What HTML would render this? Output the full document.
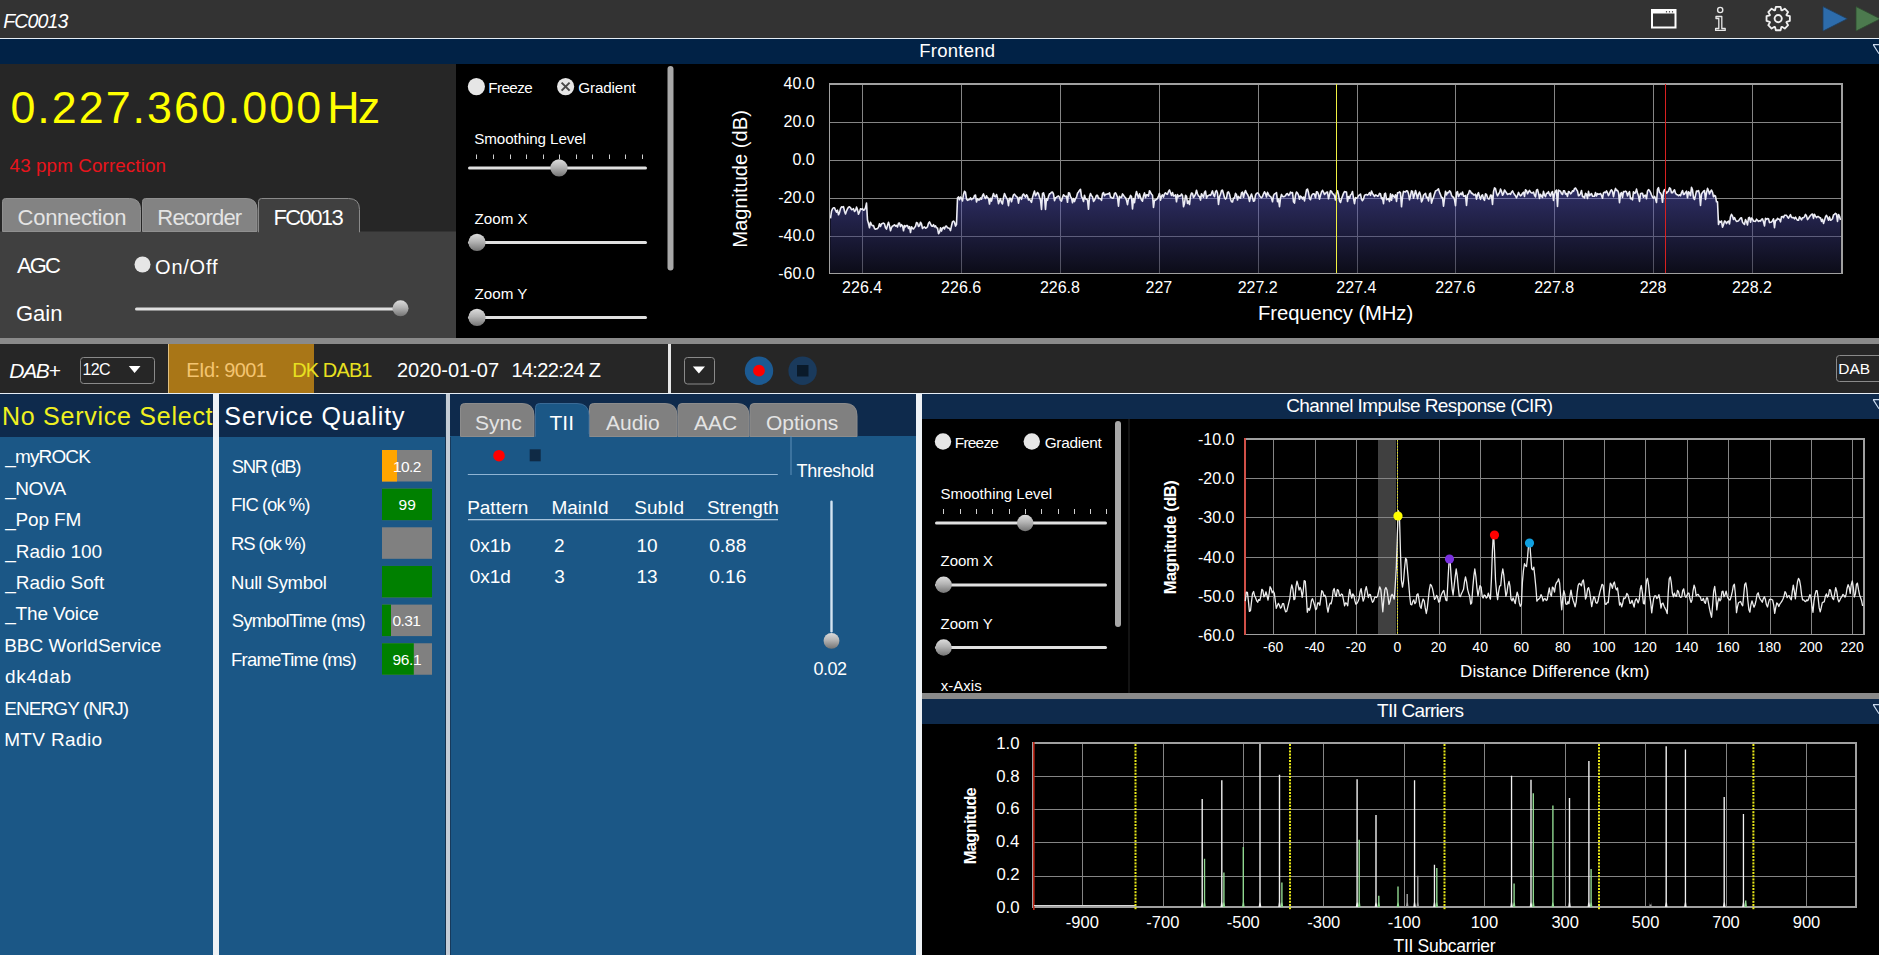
<!DOCTYPE html>
<html><head><meta charset="utf-8"><title>FC0013</title>
<style>html,body{margin:0;padding:0;background:#262626;overflow:hidden;} svg{display:block;}</style>
</head><body>
<svg width="1879" height="955" viewBox="0 0 1879 955">
<defs>
<linearGradient id="thumb" x1="0" y1="0" x2="0" y2="1">
<stop offset="0" stop-color="#dcdcdc"/><stop offset="0.45" stop-color="#b4b4b4"/><stop offset="1" stop-color="#747474"/>
</linearGradient>
<linearGradient id="specfill" gradientUnits="userSpaceOnUse" x1="0" y1="190" x2="0" y2="273">
<stop offset="0" stop-color="#5c5cc8" stop-opacity="0.5"/><stop offset="1" stop-color="#181830" stop-opacity="0.5"/>
</linearGradient>
</defs>
<rect x="0" y="0" width="1879" height="38" fill="#333333" />
<rect x="0" y="38" width="1879" height="1" fill="#e6eef6" />
<text x="3.19" y="27.70" font-family="Liberation Sans" font-size="19.60" fill="#ffffff" font-style="italic" textLength="65.30" lengthAdjust="spacing" >FC0013</text>
<rect x="1652" y="10" width="23.5" height="17.5" fill="none" stroke="#fff" stroke-width="2"/>
<rect x="1652" y="10" width="24" height="3.5" fill="#fff" />
<rect x="1665.9" y="11.2" width="1.2" height="1.2" fill="#333"/>
<rect x="1668.9" y="11.2" width="1.2" height="1.2" fill="#333"/>
<rect x="1671.9" y="11.2" width="1.2" height="1.2" fill="#333"/>
<circle cx="1720.2" cy="10" r="2.6" fill="none" stroke="#e8e8e8" stroke-width="1.4"/>
<path d="M1716 16.5 L1721.8 16.5 L1721.8 28.5 L1725.2 28.5 L1725.2 30.4 L1715.6 30.4 L1715.6 28.5 L1718.8 28.5 L1718.8 18.5 L1716 18.5 Z" fill="none" stroke="#e8e8e8" stroke-width="1.3" stroke-linejoin="round"/>
<polygon points="1786.62,15.43 1789.86,16.24 1789.86,20.96 1786.62,21.77 1786.40,22.31 1788.12,25.18 1784.78,28.52 1781.91,26.80 1781.37,27.02 1780.56,30.26 1775.84,30.26 1775.03,27.02 1774.49,26.80 1771.62,28.52 1768.28,25.18 1770.00,22.31 1769.78,21.77 1766.54,20.96 1766.54,16.24 1769.78,15.43 1770.00,14.89 1768.28,12.02 1771.62,8.68 1774.49,10.40 1775.03,10.18 1775.84,6.94 1780.56,6.94 1781.37,10.18 1781.91,10.40 1784.78,8.68 1788.12,12.02 1786.40,14.89" fill="none" stroke="#f0f0f0" stroke-width="1.8" stroke-linejoin="round"/>
<circle cx="1778.2" cy="18.6" r="3.6" fill="none" stroke="#f0f0f0" stroke-width="1.9"/>
<polygon points="1823,6.6 1847.3,18.8 1823,31.1" fill="#2d6cab" stroke="#1f3f5f" stroke-width="0.8"/>
<polygon points="1856,6.6 1880.3,18.8 1856,31.1" fill="#4c7a4e" stroke="#2f4a30" stroke-width="0.8"/>
<rect x="0" y="39" width="1879" height="25" fill="#012246" />
<text x="919.28" y="56.80" font-family="Liberation Sans" font-size="18.50" fill="#ffffff" textLength="75.81" lengthAdjust="spacing" >Frontend</text>
<path d="M1873 44.6 L1879 44.6 M1873.2 44.6 L1879 53.8" stroke="#c8d8ec" stroke-width="1.2" fill="none"/>
<rect x="0" y="64" width="456" height="274" fill="#262626" />
<rect x="0" y="231.5" width="456" height="106.5" fill="#404040" />
<text x="10.45" y="123.10" font-family="Liberation Sans" font-size="44.80" fill="#ffff00" textLength="310.60" lengthAdjust="spacing" >0.227.360.000</text>
<text x="327.33" y="123.10" font-family="Liberation Sans" font-size="44.80" fill="#ffff00" textLength="52.82" lengthAdjust="spacing" >Hz</text>
<text x="9.57" y="172.00" font-family="Liberation Sans" font-size="18.80" fill="#e8141c" textLength="156.46" lengthAdjust="spacing" >43 ppm Correction</text>
<path d="M2.5 231.5 L2.5 201.5 Q2.5 198.5 5.5 198.5 L129.5 198.5 Q140.5 198.5 140.5 209.5 L140.5 231.5 Z" fill="#838383" stroke="#909090" stroke-width="1"/>
<path d="M142.5 231.5 L142.5 201.5 Q142.5 198.5 145.5 198.5 L246 198.5 Q257 198.5 257 209.5 L257 231.5 Z" fill="#838383" stroke="#909090" stroke-width="1"/>
<path d="M258.5 232 L258.5 201.5 Q258.5 198.5 261.5 198.5 L348.5 198.5 Q359.5 198.5 359.5 209.5 L359.5 232 Z" fill="#404040" stroke="#8a8a8a" stroke-width="1"/>
<rect x="259" y="230" width="100" height="3" fill="#404040" />
<text x="17.58" y="224.90" font-family="Liberation Sans" font-size="22.00" fill="#e4e4e4" textLength="108.85" lengthAdjust="spacing" >Connection</text>
<text x="157.30" y="224.90" font-family="Liberation Sans" font-size="22.00" fill="#e4e4e4" textLength="84.87" lengthAdjust="spacing" >Recorder</text>
<text x="273.50" y="224.90" font-family="Liberation Sans" font-size="22.00" fill="#ffffff" textLength="70.19" lengthAdjust="spacing" >FC0013</text>
<text x="16.96" y="272.50" font-family="Liberation Sans" font-size="22.00" fill="#ffffff" textLength="43.88" lengthAdjust="spacing" >AGC</text>
<circle cx="142.5" cy="264.5" r="8" fill="#e6e6e6"/>
<text x="155.06" y="274.00" font-family="Liberation Sans" font-size="20.00" fill="#ffffff" textLength="62.42" lengthAdjust="spacing" >On/Off</text>
<text x="15.90" y="321.00" font-family="Liberation Sans" font-size="22.00" fill="#ffffff" textLength="46.54" lengthAdjust="spacing" >Gain</text>
<rect x="135" y="307.5" width="260" height="3" fill="#e0e0e0" rx="1.5"/>
<circle cx="400.5" cy="308.3" r="8" fill="url(#thumb)"/>
<rect x="456" y="64" width="1423" height="274" fill="#000000" />
<circle cx="476.4" cy="86.6" r="8.6" fill="#e6e6e6"/>
<text x="488.35" y="92.80" font-family="Liberation Sans" font-size="15.20" fill="#ffffff" textLength="44.32" lengthAdjust="spacing" >Freeze</text>
<circle cx="565.6" cy="86.6" r="8.6" fill="#e6e6e6"/>
<path d="M561.6 82.6 L569.6 90.6 M569.6 82.6 L561.6 90.6" stroke="#484848" stroke-width="2"/>
<text x="578.24" y="92.80" font-family="Liberation Sans" font-size="15.20" fill="#ffffff" textLength="57.46" lengthAdjust="spacing" >Gradient</text>
<text x="474.30" y="144.10" font-family="Liberation Sans" font-size="15.20" fill="#ffffff" textLength="111.62" lengthAdjust="spacing" >Smoothing Level</text>
<rect x="476" y="154.5" width="1" height="4.5" fill="#d0d0d0" />
<rect x="493" y="154.5" width="1" height="4.5" fill="#d0d0d0" />
<rect x="510" y="154.5" width="1" height="4.5" fill="#d0d0d0" />
<rect x="526" y="154.5" width="1" height="4.5" fill="#d0d0d0" />
<rect x="543" y="154.5" width="1" height="4.5" fill="#d0d0d0" />
<rect x="559" y="154.5" width="1" height="4.5" fill="#d0d0d0" />
<rect x="576" y="154.5" width="1" height="4.5" fill="#d0d0d0" />
<rect x="592" y="154.5" width="1" height="4.5" fill="#d0d0d0" />
<rect x="609" y="154.5" width="1" height="4.5" fill="#d0d0d0" />
<rect x="625" y="154.5" width="1" height="4.5" fill="#d0d0d0" />
<rect x="642" y="154.5" width="1" height="4.5" fill="#d0d0d0" />
<rect x="468" y="166.5" width="179" height="3" fill="#e0e0e0" rx="1.5"/>
<circle cx="559" cy="167.9" r="8.6" fill="url(#thumb)"/>
<text x="474.51" y="224.20" font-family="Liberation Sans" font-size="15.20" fill="#ffffff" >Zoom X</text>
<rect x="468" y="241" width="179" height="3" fill="#e0e0e0" rx="1.5"/>
<circle cx="477" cy="242.4" r="8.6" fill="url(#thumb)"/>
<text x="474.51" y="299.00" font-family="Liberation Sans" font-size="15.20" fill="#ffffff" >Zoom Y</text>
<rect x="468" y="316" width="179" height="3" fill="#e0e0e0" rx="1.5"/>
<circle cx="477" cy="317.4" r="8.6" fill="url(#thumb)"/>
<rect x="667.5" y="66" width="6" height="204.5" fill="#a8a8a8" rx="3"/>
<rect x="829" y="122" width="1013" height="1" fill="#858585" />
<rect x="829" y="160" width="1013" height="1" fill="#858585" />
<rect x="829" y="198" width="1013" height="1" fill="#858585" />
<rect x="829" y="236" width="1013" height="1" fill="#858585" />
<rect x="862" y="84" width="1" height="189" fill="#858585" />
<rect x="961" y="84" width="1" height="189" fill="#858585" />
<rect x="1060" y="84" width="1" height="189" fill="#858585" />
<rect x="1159" y="84" width="1" height="189" fill="#858585" />
<rect x="1258" y="84" width="1" height="189" fill="#858585" />
<rect x="1357" y="84" width="1" height="189" fill="#858585" />
<rect x="1455" y="84" width="1" height="189" fill="#858585" />
<rect x="1554" y="84" width="1" height="189" fill="#858585" />
<rect x="1653" y="84" width="1" height="189" fill="#858585" />
<rect x="1752" y="84" width="1" height="189" fill="#858585" />
<polygon points="830.0,273.5 830.5,218.3 831.5,211.3 832.5,208.8 833.5,207.8 834.5,207.8 835.5,210.1 836.5,212.2 837.5,210.1 838.5,214.8 839.5,212.6 840.5,208.6 841.5,206.9 842.5,207.1 843.5,206.7 844.5,211.2 845.5,213.9 846.5,211.1 847.5,208.7 848.5,207.2 849.5,206.7 850.5,207.7 851.5,209.7 852.5,209.4 853.5,208.7 854.5,211.4 855.5,210.7 856.5,207.1 857.5,209.6 858.5,214.3 859.5,212.0 860.5,208.8 861.5,209.4 862.5,208.7 863.5,210.2 864.5,209.8 865.5,207.7 866.5,203.1 867.5,220.1 868.5,223.5 869.5,227.8 870.5,222.2 871.5,224.8 872.5,225.8 873.5,225.5 874.5,228.6 875.5,229.3 876.5,228.7 877.5,228.6 878.5,227.1 879.5,223.7 880.5,226.4 881.5,224.0 882.5,223.4 883.5,223.1 884.5,223.9 885.5,227.8 886.5,229.1 887.5,225.2 888.5,222.3 889.5,225.7 890.5,230.8 891.5,227.6 892.5,226.0 893.5,225.7 894.5,224.8 895.5,226.1 896.5,225.4 897.5,227.0 898.5,223.3 899.5,223.0 900.5,226.6 901.5,224.7 902.5,225.7 903.5,230.8 904.5,225.5 905.5,226.8 906.5,225.6 907.5,225.6 908.5,228.5 909.5,226.6 910.5,232.5 911.5,226.7 912.5,228.5 913.5,228.9 914.5,227.6 915.5,226.2 916.5,222.5 917.5,223.1 918.5,226.4 919.5,225.8 920.5,222.2 921.5,224.0 922.5,228.5 923.5,227.5 924.5,226.9 925.5,228.3 926.5,227.8 927.5,226.7 928.5,223.3 929.5,221.9 930.5,223.8 931.5,225.9 932.5,226.3 933.5,224.7 934.5,226.8 935.5,225.8 936.5,227.8 937.5,228.0 938.5,233.7 939.5,232.3 940.5,227.8 941.5,231.1 942.5,228.1 943.5,227.3 944.5,229.0 945.5,226.2 946.5,226.1 947.5,227.8 948.5,228.0 949.5,228.5 950.5,230.6 951.5,225.8 952.5,221.8 953.5,221.0 954.5,222.2 955.5,226.1 956.5,224.4 957.5,198.1 958.5,196.9 959.5,199.8 960.5,197.1 961.5,198.2 962.5,201.0 963.5,194.4 964.5,191.2 965.5,192.3 966.5,199.0 967.5,200.4 968.5,199.8 969.5,199.5 970.5,197.8 971.5,199.7 972.5,198.5 973.5,198.4 974.5,195.4 975.5,195.1 976.5,201.9 977.5,198.7 978.5,199.9 979.5,199.9 980.5,197.9 981.5,199.2 982.5,195.6 983.5,193.9 984.5,197.1 985.5,198.5 986.5,195.8 987.5,197.8 988.5,198.2 989.5,204.0 990.5,198.2 991.5,201.1 992.5,196.7 993.5,193.6 994.5,196.4 995.5,196.9 996.5,194.6 997.5,197.8 998.5,203.7 999.5,200.7 1000.5,198.6 1001.5,202.6 1002.5,203.9 1003.5,197.5 1004.5,193.5 1005.5,195.9 1006.5,197.9 1007.5,199.6 1008.5,205.6 1009.5,198.2 1010.5,198.3 1011.5,201.8 1012.5,197.9 1013.5,194.8 1014.5,194.1 1015.5,195.6 1016.5,196.8 1017.5,197.2 1018.5,203.1 1019.5,197.6 1020.5,197.4 1021.5,199.3 1022.5,195.3 1023.5,194.0 1024.5,195.5 1025.5,197.2 1026.5,194.8 1027.5,196.2 1028.5,200.0 1029.5,199.4 1030.5,200.6 1031.5,202.4 1032.5,197.4 1033.5,193.9 1034.5,191.1 1035.5,195.8 1036.5,194.3 1037.5,192.5 1038.5,193.6 1039.5,197.3 1040.5,199.9 1041.5,209.5 1042.5,193.7 1043.5,192.8 1044.5,196.6 1045.5,209.5 1046.5,198.7 1047.5,200.4 1048.5,196.4 1049.5,193.8 1050.5,193.6 1051.5,192.3 1052.5,192.1 1053.5,194.2 1054.5,200.7 1055.5,197.7 1056.5,197.4 1057.5,196.4 1058.5,195.9 1059.5,197.2 1060.5,200.4 1061.5,201.1 1062.5,197.5 1063.5,194.7 1064.5,195.8 1065.5,196.6 1066.5,196.2 1067.5,202.3 1068.5,192.9 1069.5,193.0 1070.5,196.7 1071.5,197.9 1072.5,202.8 1073.5,198.5 1074.5,201.6 1075.5,198.5 1076.5,197.3 1077.5,193.3 1078.5,192.0 1079.5,190.3 1080.5,189.4 1081.5,196.7 1082.5,198.2 1083.5,201.5 1084.5,195.2 1085.5,198.9 1086.5,199.1 1087.5,200.1 1088.5,209.3 1089.5,196.7 1090.5,193.5 1091.5,195.8 1092.5,196.8 1093.5,201.4 1094.5,200.3 1095.5,197.9 1096.5,195.3 1097.5,195.3 1098.5,198.5 1099.5,198.4 1100.5,198.9 1101.5,200.3 1102.5,193.7 1103.5,192.5 1104.5,195.7 1105.5,194.4 1106.5,194.2 1107.5,193.9 1108.5,194.0 1109.5,192.9 1110.5,197.2 1111.5,197.4 1112.5,198.3 1113.5,197.9 1114.5,193.5 1115.5,192.8 1116.5,194.7 1117.5,197.3 1118.5,206.2 1119.5,196.2 1120.5,197.5 1121.5,197.5 1122.5,193.9 1123.5,195.2 1124.5,196.8 1125.5,197.6 1126.5,200.2 1127.5,204.6 1128.5,198.7 1129.5,198.3 1130.5,195.4 1131.5,196.6 1132.5,209.0 1133.5,198.6 1134.5,202.6 1135.5,195.7 1136.5,191.5 1137.5,194.9 1138.5,198.1 1139.5,193.9 1140.5,197.4 1141.5,200.0 1142.5,201.1 1143.5,195.7 1144.5,192.9 1145.5,197.7 1146.5,194.8 1147.5,194.8 1148.5,196.2 1149.5,190.7 1150.5,192.5 1151.5,194.2 1152.5,195.3 1153.5,207.5 1154.5,200.0 1155.5,200.2 1156.5,199.4 1157.5,198.4 1158.5,196.0 1159.5,193.4 1160.5,200.1 1161.5,196.3 1162.5,194.8 1163.5,197.1 1164.5,194.1 1165.5,192.8 1166.5,193.9 1167.5,194.3 1168.5,191.4 1169.5,190.0 1170.5,192.7 1171.5,195.5 1172.5,192.6 1173.5,196.0 1174.5,195.8 1175.5,194.8 1176.5,201.8 1177.5,194.5 1178.5,196.8 1179.5,195.7 1180.5,195.9 1181.5,194.0 1182.5,195.4 1183.5,206.7 1184.5,203.5 1185.5,195.4 1186.5,196.4 1187.5,203.4 1188.5,201.1 1189.5,204.5 1190.5,196.0 1191.5,193.0 1192.5,193.5 1193.5,197.5 1194.5,196.1 1195.5,194.2 1196.5,190.3 1197.5,193.7 1198.5,196.0 1199.5,196.5 1200.5,200.1 1201.5,193.7 1202.5,195.4 1203.5,197.3 1204.5,192.4 1205.5,191.1 1206.5,198.2 1207.5,196.0 1208.5,195.6 1209.5,194.9 1210.5,195.4 1211.5,193.4 1212.5,190.9 1213.5,194.9 1214.5,196.6 1215.5,191.8 1216.5,190.5 1217.5,193.0 1218.5,204.5 1219.5,196.6 1220.5,194.2 1221.5,190.6 1222.5,190.2 1223.5,193.8 1224.5,197.7 1225.5,199.1 1226.5,197.9 1227.5,192.5 1228.5,191.9 1229.5,194.2 1230.5,198.9 1231.5,201.8 1232.5,202.0 1233.5,198.0 1234.5,198.1 1235.5,193.4 1236.5,194.8 1237.5,200.0 1238.5,196.4 1239.5,197.7 1240.5,198.2 1241.5,192.9 1242.5,192.1 1243.5,197.3 1244.5,193.1 1245.5,190.5 1246.5,193.1 1247.5,194.4 1248.5,196.8 1249.5,201.4 1250.5,196.5 1251.5,194.1 1252.5,197.5 1253.5,201.2 1254.5,200.8 1255.5,195.1 1256.5,193.4 1257.5,192.9 1258.5,193.5 1259.5,195.6 1260.5,197.1 1261.5,197.7 1262.5,196.5 1263.5,193.8 1264.5,191.8 1265.5,193.6 1266.5,196.9 1267.5,192.3 1268.5,194.3 1269.5,196.1 1270.5,196.4 1271.5,198.2 1272.5,201.8 1273.5,195.7 1274.5,193.9 1275.5,193.6 1276.5,192.6 1277.5,201.6 1278.5,199.1 1279.5,206.7 1280.5,198.2 1281.5,194.4 1282.5,196.5 1283.5,196.6 1284.5,196.5 1285.5,195.7 1286.5,194.0 1287.5,193.5 1288.5,195.5 1289.5,194.6 1290.5,192.1 1291.5,192.9 1292.5,192.5 1293.5,201.8 1294.5,203.1 1295.5,195.2 1296.5,192.0 1297.5,193.1 1298.5,195.0 1299.5,199.2 1300.5,196.1 1301.5,196.8 1302.5,199.0 1303.5,197.0 1304.5,200.9 1305.5,195.4 1306.5,189.8 1307.5,189.0 1308.5,192.7 1309.5,198.5 1310.5,199.7 1311.5,195.6 1312.5,194.2 1313.5,193.7 1314.5,194.3 1315.5,197.8 1316.5,191.7 1317.5,192.1 1318.5,194.4 1319.5,199.1 1320.5,195.3 1321.5,191.9 1322.5,190.3 1323.5,192.1 1324.5,194.4 1325.5,193.4 1326.5,192.2 1327.5,192.0 1328.5,198.8 1329.5,194.9 1330.5,190.8 1331.5,191.4 1332.5,193.8 1333.5,194.0 1334.5,195.8 1335.5,200.0 1336.5,192.6 1337.5,190.8 1338.5,194.5 1339.5,200.9 1340.5,202.5 1341.5,198.7 1342.5,196.1 1343.5,193.4 1344.5,191.5 1345.5,191.9 1346.5,192.0 1347.5,201.5 1348.5,196.5 1349.5,198.4 1350.5,195.0 1351.5,194.2 1352.5,191.5 1353.5,198.3 1354.5,203.6 1355.5,197.6 1356.5,198.2 1357.5,197.8 1358.5,195.5 1359.5,195.1 1360.5,194.1 1361.5,199.2 1362.5,200.7 1363.5,199.1 1364.5,195.4 1365.5,194.8 1366.5,194.5 1367.5,195.1 1368.5,194.3 1369.5,192.7 1370.5,195.3 1371.5,191.1 1372.5,193.6 1373.5,194.9 1374.5,196.5 1375.5,194.9 1376.5,195.3 1377.5,196.3 1378.5,195.7 1379.5,193.4 1380.5,193.8 1381.5,198.7 1382.5,197.8 1383.5,203.6 1384.5,193.9 1385.5,193.2 1386.5,199.7 1387.5,199.3 1388.5,198.5 1389.5,201.4 1390.5,193.9 1391.5,200.3 1392.5,194.6 1393.5,196.3 1394.5,197.3 1395.5,194.8 1396.5,201.4 1397.5,192.8 1398.5,192.8 1399.5,191.9 1400.5,192.9 1401.5,206.8 1402.5,197.0 1403.5,191.4 1404.5,191.7 1405.5,191.9 1406.5,190.8 1407.5,191.1 1408.5,193.8 1409.5,199.8 1410.5,195.7 1411.5,190.9 1412.5,191.4 1413.5,198.3 1414.5,194.8 1415.5,190.6 1416.5,193.9 1417.5,198.7 1418.5,194.4 1419.5,192.1 1420.5,195.0 1421.5,201.9 1422.5,200.0 1423.5,195.4 1424.5,194.3 1425.5,193.3 1426.5,197.7 1427.5,197.3 1428.5,200.9 1429.5,194.0 1430.5,193.0 1431.5,203.1 1432.5,199.5 1433.5,197.4 1434.5,193.9 1435.5,190.9 1436.5,190.6 1437.5,189.9 1438.5,188.9 1439.5,192.4 1440.5,194.6 1441.5,197.7 1442.5,197.5 1443.5,206.2 1444.5,198.7 1445.5,191.3 1446.5,194.9 1447.5,192.5 1448.5,192.8 1449.5,190.8 1450.5,191.8 1451.5,195.1 1452.5,197.0 1453.5,197.0 1454.5,199.6 1455.5,205.6 1456.5,192.6 1457.5,191.6 1458.5,196.5 1459.5,194.9 1460.5,193.3 1461.5,194.6 1462.5,192.0 1463.5,196.1 1464.5,196.1 1465.5,195.5 1466.5,205.5 1467.5,194.8 1468.5,193.7 1469.5,190.6 1470.5,191.2 1471.5,193.5 1472.5,193.3 1473.5,194.9 1474.5,195.0 1475.5,194.2 1476.5,199.1 1477.5,194.7 1478.5,192.7 1479.5,196.7 1480.5,199.3 1481.5,195.8 1482.5,194.8 1483.5,198.8 1484.5,200.4 1485.5,193.9 1486.5,194.5 1487.5,197.6 1488.5,199.0 1489.5,198.7 1490.5,195.1 1491.5,195.2 1492.5,204.5 1493.5,191.8 1494.5,187.9 1495.5,188.7 1496.5,193.2 1497.5,195.8 1498.5,193.9 1499.5,192.6 1500.5,189.1 1501.5,191.3 1502.5,195.2 1503.5,193.7 1504.5,190.0 1505.5,191.5 1506.5,192.8 1507.5,194.5 1508.5,193.9 1509.5,193.6 1510.5,194.3 1511.5,192.2 1512.5,190.9 1513.5,192.8 1514.5,194.6 1515.5,195.7 1516.5,197.8 1517.5,195.5 1518.5,192.4 1519.5,194.5 1520.5,195.9 1521.5,195.1 1522.5,193.2 1523.5,192.2 1524.5,196.4 1525.5,189.8 1526.5,190.6 1527.5,193.8 1528.5,191.9 1529.5,190.4 1530.5,192.2 1531.5,192.9 1532.5,193.0 1533.5,192.0 1534.5,195.3 1535.5,196.8 1536.5,190.1 1537.5,189.5 1538.5,193.1 1539.5,198.4 1540.5,194.3 1541.5,196.2 1542.5,197.4 1543.5,191.4 1544.5,195.2 1545.5,196.6 1546.5,193.2 1547.5,193.2 1548.5,191.7 1549.5,194.5 1550.5,196.1 1551.5,192.7 1552.5,191.6 1553.5,200.4 1554.5,193.8 1555.5,191.3 1556.5,190.1 1557.5,206.4 1558.5,190.0 1559.5,190.8 1560.5,191.2 1561.5,193.6 1562.5,194.5 1563.5,190.9 1564.5,190.7 1565.5,194.1 1566.5,193.5 1567.5,196.4 1568.5,191.5 1569.5,192.0 1570.5,193.9 1571.5,192.9 1572.5,190.8 1573.5,191.4 1574.5,188.6 1575.5,188.0 1576.5,189.6 1577.5,191.2 1578.5,195.8 1579.5,195.2 1580.5,193.6 1581.5,190.5 1582.5,196.6 1583.5,196.5 1584.5,198.0 1585.5,193.4 1586.5,194.2 1587.5,198.5 1588.5,191.3 1589.5,195.8 1590.5,194.6 1591.5,193.5 1592.5,196.1 1593.5,196.3 1594.5,196.2 1595.5,192.5 1596.5,195.9 1597.5,193.7 1598.5,194.3 1599.5,194.1 1600.5,193.5 1601.5,195.4 1602.5,198.3 1603.5,192.8 1604.5,192.1 1605.5,192.7 1606.5,190.9 1607.5,192.9 1608.5,195.6 1609.5,193.6 1610.5,191.0 1611.5,189.9 1612.5,191.5 1613.5,196.6 1614.5,191.9 1615.5,188.4 1616.5,190.5 1617.5,190.4 1618.5,192.5 1619.5,202.7 1620.5,193.8 1621.5,192.6 1622.5,197.4 1623.5,191.6 1624.5,191.7 1625.5,191.1 1626.5,191.9 1627.5,195.9 1628.5,193.4 1629.5,191.7 1630.5,198.7 1631.5,198.2 1632.5,199.8 1633.5,191.7 1634.5,193.3 1635.5,192.7 1636.5,189.1 1637.5,192.9 1638.5,196.1 1639.5,201.4 1640.5,193.8 1641.5,193.2 1642.5,193.3 1643.5,197.3 1644.5,195.6 1645.5,195.2 1646.5,198.7 1647.5,191.1 1648.5,189.6 1649.5,190.6 1650.5,192.4 1651.5,195.0 1652.5,197.2 1653.5,198.2 1654.5,196.4 1655.5,198.8 1656.5,202.5 1657.5,189.5 1658.5,187.7 1659.5,192.6 1660.5,193.0 1661.5,195.1 1662.5,202.3 1663.5,191.8 1664.5,189.7 1665.5,191.2 1666.5,193.2 1667.5,192.0 1668.5,191.1 1669.5,187.8 1670.5,188.6 1671.5,192.8 1672.5,192.7 1673.5,191.2 1674.5,189.8 1675.5,193.3 1676.5,194.4 1677.5,194.7 1678.5,195.7 1679.5,194.8 1680.5,195.8 1681.5,192.5 1682.5,190.5 1683.5,194.5 1684.5,194.2 1685.5,192.4 1686.5,191.2 1687.5,197.8 1688.5,191.9 1689.5,192.9 1690.5,195.6 1691.5,187.4 1692.5,189.8 1693.5,197.8 1694.5,199.5 1695.5,195.4 1696.5,191.0 1697.5,191.4 1698.5,190.6 1699.5,194.0 1700.5,205.5 1701.5,194.1 1702.5,192.4 1703.5,191.2 1704.5,190.5 1705.5,199.5 1706.5,192.9 1707.5,188.3 1708.5,190.8 1709.5,194.0 1710.5,191.4 1711.5,190.1 1712.5,192.3 1713.5,196.7 1714.5,195.4 1715.5,196.1 1716.5,201.8 1717.5,201.8 1718.5,224.4 1719.5,221.3 1720.5,222.3 1721.5,221.0 1722.5,227.1 1723.5,224.7 1724.5,221.1 1725.5,221.5 1726.5,223.6 1727.5,221.9 1728.5,221.1 1729.5,224.0 1730.5,216.7 1731.5,214.3 1732.5,216.1 1733.5,219.4 1734.5,217.6 1735.5,219.9 1736.5,221.4 1737.5,221.2 1738.5,220.7 1739.5,219.5 1740.5,218.1 1741.5,217.8 1742.5,222.1 1743.5,223.6 1744.5,224.4 1745.5,219.6 1746.5,221.6 1747.5,224.9 1748.5,218.0 1749.5,217.4 1750.5,222.2 1751.5,218.0 1752.5,219.0 1753.5,221.1 1754.5,221.2 1755.5,221.5 1756.5,219.2 1757.5,220.2 1758.5,221.4 1759.5,220.8 1760.5,221.1 1761.5,219.3 1762.5,218.9 1763.5,221.7 1764.5,225.9 1765.5,218.3 1766.5,219.4 1767.5,218.6 1768.5,218.8 1769.5,222.6 1770.5,222.3 1771.5,221.9 1772.5,220.7 1773.5,218.8 1774.5,227.6 1775.5,220.2 1776.5,220.4 1777.5,218.3 1778.5,219.2 1779.5,219.3 1780.5,221.8 1781.5,216.7 1782.5,216.5 1783.5,217.7 1784.5,215.3 1785.5,215.2 1786.5,215.3 1787.5,216.9 1788.5,218.2 1789.5,216.4 1790.5,214.7 1791.5,217.5 1792.5,217.6 1793.5,217.5 1794.5,218.8 1795.5,217.1 1796.5,218.9 1797.5,220.3 1798.5,220.2 1799.5,216.7 1800.5,218.3 1801.5,219.9 1802.5,217.7 1803.5,217.8 1804.5,216.8 1805.5,214.4 1806.5,216.0 1807.5,219.6 1808.5,218.4 1809.5,216.8 1810.5,215.5 1811.5,214.5 1812.5,214.0 1813.5,218.4 1814.5,214.3 1815.5,216.1 1816.5,217.6 1817.5,216.5 1818.5,216.5 1819.5,217.7 1820.5,217.8 1821.5,221.4 1822.5,219.3 1823.5,223.4 1824.5,220.2 1825.5,216.7 1826.5,215.3 1827.5,217.5 1828.5,220.2 1829.5,216.9 1830.5,220.3 1831.5,219.8 1832.5,218.8 1833.5,215.0 1834.5,214.4 1835.5,213.4 1836.5,214.1 1837.5,221.4 1838.5,214.5 1839.5,216.3 1840.5,220.0 1841.0,273.5" fill="url(#specfill)"/>
<polyline points="830.5,218.3 831.5,211.3 832.5,208.8 833.5,207.8 834.5,207.8 835.5,210.1 836.5,212.2 837.5,210.1 838.5,214.8 839.5,212.6 840.5,208.6 841.5,206.9 842.5,207.1 843.5,206.7 844.5,211.2 845.5,213.9 846.5,211.1 847.5,208.7 848.5,207.2 849.5,206.7 850.5,207.7 851.5,209.7 852.5,209.4 853.5,208.7 854.5,211.4 855.5,210.7 856.5,207.1 857.5,209.6 858.5,214.3 859.5,212.0 860.5,208.8 861.5,209.4 862.5,208.7 863.5,210.2 864.5,209.8 865.5,207.7 866.5,203.1 867.5,220.1 868.5,223.5 869.5,227.8 870.5,222.2 871.5,224.8 872.5,225.8 873.5,225.5 874.5,228.6 875.5,229.3 876.5,228.7 877.5,228.6 878.5,227.1 879.5,223.7 880.5,226.4 881.5,224.0 882.5,223.4 883.5,223.1 884.5,223.9 885.5,227.8 886.5,229.1 887.5,225.2 888.5,222.3 889.5,225.7 890.5,230.8 891.5,227.6 892.5,226.0 893.5,225.7 894.5,224.8 895.5,226.1 896.5,225.4 897.5,227.0 898.5,223.3 899.5,223.0 900.5,226.6 901.5,224.7 902.5,225.7 903.5,230.8 904.5,225.5 905.5,226.8 906.5,225.6 907.5,225.6 908.5,228.5 909.5,226.6 910.5,232.5 911.5,226.7 912.5,228.5 913.5,228.9 914.5,227.6 915.5,226.2 916.5,222.5 917.5,223.1 918.5,226.4 919.5,225.8 920.5,222.2 921.5,224.0 922.5,228.5 923.5,227.5 924.5,226.9 925.5,228.3 926.5,227.8 927.5,226.7 928.5,223.3 929.5,221.9 930.5,223.8 931.5,225.9 932.5,226.3 933.5,224.7 934.5,226.8 935.5,225.8 936.5,227.8 937.5,228.0 938.5,233.7 939.5,232.3 940.5,227.8 941.5,231.1 942.5,228.1 943.5,227.3 944.5,229.0 945.5,226.2 946.5,226.1 947.5,227.8 948.5,228.0 949.5,228.5 950.5,230.6 951.5,225.8 952.5,221.8 953.5,221.0 954.5,222.2 955.5,226.1 956.5,224.4 957.5,198.1 958.5,196.9 959.5,199.8 960.5,197.1 961.5,198.2 962.5,201.0 963.5,194.4 964.5,191.2 965.5,192.3 966.5,199.0 967.5,200.4 968.5,199.8 969.5,199.5 970.5,197.8 971.5,199.7 972.5,198.5 973.5,198.4 974.5,195.4 975.5,195.1 976.5,201.9 977.5,198.7 978.5,199.9 979.5,199.9 980.5,197.9 981.5,199.2 982.5,195.6 983.5,193.9 984.5,197.1 985.5,198.5 986.5,195.8 987.5,197.8 988.5,198.2 989.5,204.0 990.5,198.2 991.5,201.1 992.5,196.7 993.5,193.6 994.5,196.4 995.5,196.9 996.5,194.6 997.5,197.8 998.5,203.7 999.5,200.7 1000.5,198.6 1001.5,202.6 1002.5,203.9 1003.5,197.5 1004.5,193.5 1005.5,195.9 1006.5,197.9 1007.5,199.6 1008.5,205.6 1009.5,198.2 1010.5,198.3 1011.5,201.8 1012.5,197.9 1013.5,194.8 1014.5,194.1 1015.5,195.6 1016.5,196.8 1017.5,197.2 1018.5,203.1 1019.5,197.6 1020.5,197.4 1021.5,199.3 1022.5,195.3 1023.5,194.0 1024.5,195.5 1025.5,197.2 1026.5,194.8 1027.5,196.2 1028.5,200.0 1029.5,199.4 1030.5,200.6 1031.5,202.4 1032.5,197.4 1033.5,193.9 1034.5,191.1 1035.5,195.8 1036.5,194.3 1037.5,192.5 1038.5,193.6 1039.5,197.3 1040.5,199.9 1041.5,209.5 1042.5,193.7 1043.5,192.8 1044.5,196.6 1045.5,209.5 1046.5,198.7 1047.5,200.4 1048.5,196.4 1049.5,193.8 1050.5,193.6 1051.5,192.3 1052.5,192.1 1053.5,194.2 1054.5,200.7 1055.5,197.7 1056.5,197.4 1057.5,196.4 1058.5,195.9 1059.5,197.2 1060.5,200.4 1061.5,201.1 1062.5,197.5 1063.5,194.7 1064.5,195.8 1065.5,196.6 1066.5,196.2 1067.5,202.3 1068.5,192.9 1069.5,193.0 1070.5,196.7 1071.5,197.9 1072.5,202.8 1073.5,198.5 1074.5,201.6 1075.5,198.5 1076.5,197.3 1077.5,193.3 1078.5,192.0 1079.5,190.3 1080.5,189.4 1081.5,196.7 1082.5,198.2 1083.5,201.5 1084.5,195.2 1085.5,198.9 1086.5,199.1 1087.5,200.1 1088.5,209.3 1089.5,196.7 1090.5,193.5 1091.5,195.8 1092.5,196.8 1093.5,201.4 1094.5,200.3 1095.5,197.9 1096.5,195.3 1097.5,195.3 1098.5,198.5 1099.5,198.4 1100.5,198.9 1101.5,200.3 1102.5,193.7 1103.5,192.5 1104.5,195.7 1105.5,194.4 1106.5,194.2 1107.5,193.9 1108.5,194.0 1109.5,192.9 1110.5,197.2 1111.5,197.4 1112.5,198.3 1113.5,197.9 1114.5,193.5 1115.5,192.8 1116.5,194.7 1117.5,197.3 1118.5,206.2 1119.5,196.2 1120.5,197.5 1121.5,197.5 1122.5,193.9 1123.5,195.2 1124.5,196.8 1125.5,197.6 1126.5,200.2 1127.5,204.6 1128.5,198.7 1129.5,198.3 1130.5,195.4 1131.5,196.6 1132.5,209.0 1133.5,198.6 1134.5,202.6 1135.5,195.7 1136.5,191.5 1137.5,194.9 1138.5,198.1 1139.5,193.9 1140.5,197.4 1141.5,200.0 1142.5,201.1 1143.5,195.7 1144.5,192.9 1145.5,197.7 1146.5,194.8 1147.5,194.8 1148.5,196.2 1149.5,190.7 1150.5,192.5 1151.5,194.2 1152.5,195.3 1153.5,207.5 1154.5,200.0 1155.5,200.2 1156.5,199.4 1157.5,198.4 1158.5,196.0 1159.5,193.4 1160.5,200.1 1161.5,196.3 1162.5,194.8 1163.5,197.1 1164.5,194.1 1165.5,192.8 1166.5,193.9 1167.5,194.3 1168.5,191.4 1169.5,190.0 1170.5,192.7 1171.5,195.5 1172.5,192.6 1173.5,196.0 1174.5,195.8 1175.5,194.8 1176.5,201.8 1177.5,194.5 1178.5,196.8 1179.5,195.7 1180.5,195.9 1181.5,194.0 1182.5,195.4 1183.5,206.7 1184.5,203.5 1185.5,195.4 1186.5,196.4 1187.5,203.4 1188.5,201.1 1189.5,204.5 1190.5,196.0 1191.5,193.0 1192.5,193.5 1193.5,197.5 1194.5,196.1 1195.5,194.2 1196.5,190.3 1197.5,193.7 1198.5,196.0 1199.5,196.5 1200.5,200.1 1201.5,193.7 1202.5,195.4 1203.5,197.3 1204.5,192.4 1205.5,191.1 1206.5,198.2 1207.5,196.0 1208.5,195.6 1209.5,194.9 1210.5,195.4 1211.5,193.4 1212.5,190.9 1213.5,194.9 1214.5,196.6 1215.5,191.8 1216.5,190.5 1217.5,193.0 1218.5,204.5 1219.5,196.6 1220.5,194.2 1221.5,190.6 1222.5,190.2 1223.5,193.8 1224.5,197.7 1225.5,199.1 1226.5,197.9 1227.5,192.5 1228.5,191.9 1229.5,194.2 1230.5,198.9 1231.5,201.8 1232.5,202.0 1233.5,198.0 1234.5,198.1 1235.5,193.4 1236.5,194.8 1237.5,200.0 1238.5,196.4 1239.5,197.7 1240.5,198.2 1241.5,192.9 1242.5,192.1 1243.5,197.3 1244.5,193.1 1245.5,190.5 1246.5,193.1 1247.5,194.4 1248.5,196.8 1249.5,201.4 1250.5,196.5 1251.5,194.1 1252.5,197.5 1253.5,201.2 1254.5,200.8 1255.5,195.1 1256.5,193.4 1257.5,192.9 1258.5,193.5 1259.5,195.6 1260.5,197.1 1261.5,197.7 1262.5,196.5 1263.5,193.8 1264.5,191.8 1265.5,193.6 1266.5,196.9 1267.5,192.3 1268.5,194.3 1269.5,196.1 1270.5,196.4 1271.5,198.2 1272.5,201.8 1273.5,195.7 1274.5,193.9 1275.5,193.6 1276.5,192.6 1277.5,201.6 1278.5,199.1 1279.5,206.7 1280.5,198.2 1281.5,194.4 1282.5,196.5 1283.5,196.6 1284.5,196.5 1285.5,195.7 1286.5,194.0 1287.5,193.5 1288.5,195.5 1289.5,194.6 1290.5,192.1 1291.5,192.9 1292.5,192.5 1293.5,201.8 1294.5,203.1 1295.5,195.2 1296.5,192.0 1297.5,193.1 1298.5,195.0 1299.5,199.2 1300.5,196.1 1301.5,196.8 1302.5,199.0 1303.5,197.0 1304.5,200.9 1305.5,195.4 1306.5,189.8 1307.5,189.0 1308.5,192.7 1309.5,198.5 1310.5,199.7 1311.5,195.6 1312.5,194.2 1313.5,193.7 1314.5,194.3 1315.5,197.8 1316.5,191.7 1317.5,192.1 1318.5,194.4 1319.5,199.1 1320.5,195.3 1321.5,191.9 1322.5,190.3 1323.5,192.1 1324.5,194.4 1325.5,193.4 1326.5,192.2 1327.5,192.0 1328.5,198.8 1329.5,194.9 1330.5,190.8 1331.5,191.4 1332.5,193.8 1333.5,194.0 1334.5,195.8 1335.5,200.0 1336.5,192.6 1337.5,190.8 1338.5,194.5 1339.5,200.9 1340.5,202.5 1341.5,198.7 1342.5,196.1 1343.5,193.4 1344.5,191.5 1345.5,191.9 1346.5,192.0 1347.5,201.5 1348.5,196.5 1349.5,198.4 1350.5,195.0 1351.5,194.2 1352.5,191.5 1353.5,198.3 1354.5,203.6 1355.5,197.6 1356.5,198.2 1357.5,197.8 1358.5,195.5 1359.5,195.1 1360.5,194.1 1361.5,199.2 1362.5,200.7 1363.5,199.1 1364.5,195.4 1365.5,194.8 1366.5,194.5 1367.5,195.1 1368.5,194.3 1369.5,192.7 1370.5,195.3 1371.5,191.1 1372.5,193.6 1373.5,194.9 1374.5,196.5 1375.5,194.9 1376.5,195.3 1377.5,196.3 1378.5,195.7 1379.5,193.4 1380.5,193.8 1381.5,198.7 1382.5,197.8 1383.5,203.6 1384.5,193.9 1385.5,193.2 1386.5,199.7 1387.5,199.3 1388.5,198.5 1389.5,201.4 1390.5,193.9 1391.5,200.3 1392.5,194.6 1393.5,196.3 1394.5,197.3 1395.5,194.8 1396.5,201.4 1397.5,192.8 1398.5,192.8 1399.5,191.9 1400.5,192.9 1401.5,206.8 1402.5,197.0 1403.5,191.4 1404.5,191.7 1405.5,191.9 1406.5,190.8 1407.5,191.1 1408.5,193.8 1409.5,199.8 1410.5,195.7 1411.5,190.9 1412.5,191.4 1413.5,198.3 1414.5,194.8 1415.5,190.6 1416.5,193.9 1417.5,198.7 1418.5,194.4 1419.5,192.1 1420.5,195.0 1421.5,201.9 1422.5,200.0 1423.5,195.4 1424.5,194.3 1425.5,193.3 1426.5,197.7 1427.5,197.3 1428.5,200.9 1429.5,194.0 1430.5,193.0 1431.5,203.1 1432.5,199.5 1433.5,197.4 1434.5,193.9 1435.5,190.9 1436.5,190.6 1437.5,189.9 1438.5,188.9 1439.5,192.4 1440.5,194.6 1441.5,197.7 1442.5,197.5 1443.5,206.2 1444.5,198.7 1445.5,191.3 1446.5,194.9 1447.5,192.5 1448.5,192.8 1449.5,190.8 1450.5,191.8 1451.5,195.1 1452.5,197.0 1453.5,197.0 1454.5,199.6 1455.5,205.6 1456.5,192.6 1457.5,191.6 1458.5,196.5 1459.5,194.9 1460.5,193.3 1461.5,194.6 1462.5,192.0 1463.5,196.1 1464.5,196.1 1465.5,195.5 1466.5,205.5 1467.5,194.8 1468.5,193.7 1469.5,190.6 1470.5,191.2 1471.5,193.5 1472.5,193.3 1473.5,194.9 1474.5,195.0 1475.5,194.2 1476.5,199.1 1477.5,194.7 1478.5,192.7 1479.5,196.7 1480.5,199.3 1481.5,195.8 1482.5,194.8 1483.5,198.8 1484.5,200.4 1485.5,193.9 1486.5,194.5 1487.5,197.6 1488.5,199.0 1489.5,198.7 1490.5,195.1 1491.5,195.2 1492.5,204.5 1493.5,191.8 1494.5,187.9 1495.5,188.7 1496.5,193.2 1497.5,195.8 1498.5,193.9 1499.5,192.6 1500.5,189.1 1501.5,191.3 1502.5,195.2 1503.5,193.7 1504.5,190.0 1505.5,191.5 1506.5,192.8 1507.5,194.5 1508.5,193.9 1509.5,193.6 1510.5,194.3 1511.5,192.2 1512.5,190.9 1513.5,192.8 1514.5,194.6 1515.5,195.7 1516.5,197.8 1517.5,195.5 1518.5,192.4 1519.5,194.5 1520.5,195.9 1521.5,195.1 1522.5,193.2 1523.5,192.2 1524.5,196.4 1525.5,189.8 1526.5,190.6 1527.5,193.8 1528.5,191.9 1529.5,190.4 1530.5,192.2 1531.5,192.9 1532.5,193.0 1533.5,192.0 1534.5,195.3 1535.5,196.8 1536.5,190.1 1537.5,189.5 1538.5,193.1 1539.5,198.4 1540.5,194.3 1541.5,196.2 1542.5,197.4 1543.5,191.4 1544.5,195.2 1545.5,196.6 1546.5,193.2 1547.5,193.2 1548.5,191.7 1549.5,194.5 1550.5,196.1 1551.5,192.7 1552.5,191.6 1553.5,200.4 1554.5,193.8 1555.5,191.3 1556.5,190.1 1557.5,206.4 1558.5,190.0 1559.5,190.8 1560.5,191.2 1561.5,193.6 1562.5,194.5 1563.5,190.9 1564.5,190.7 1565.5,194.1 1566.5,193.5 1567.5,196.4 1568.5,191.5 1569.5,192.0 1570.5,193.9 1571.5,192.9 1572.5,190.8 1573.5,191.4 1574.5,188.6 1575.5,188.0 1576.5,189.6 1577.5,191.2 1578.5,195.8 1579.5,195.2 1580.5,193.6 1581.5,190.5 1582.5,196.6 1583.5,196.5 1584.5,198.0 1585.5,193.4 1586.5,194.2 1587.5,198.5 1588.5,191.3 1589.5,195.8 1590.5,194.6 1591.5,193.5 1592.5,196.1 1593.5,196.3 1594.5,196.2 1595.5,192.5 1596.5,195.9 1597.5,193.7 1598.5,194.3 1599.5,194.1 1600.5,193.5 1601.5,195.4 1602.5,198.3 1603.5,192.8 1604.5,192.1 1605.5,192.7 1606.5,190.9 1607.5,192.9 1608.5,195.6 1609.5,193.6 1610.5,191.0 1611.5,189.9 1612.5,191.5 1613.5,196.6 1614.5,191.9 1615.5,188.4 1616.5,190.5 1617.5,190.4 1618.5,192.5 1619.5,202.7 1620.5,193.8 1621.5,192.6 1622.5,197.4 1623.5,191.6 1624.5,191.7 1625.5,191.1 1626.5,191.9 1627.5,195.9 1628.5,193.4 1629.5,191.7 1630.5,198.7 1631.5,198.2 1632.5,199.8 1633.5,191.7 1634.5,193.3 1635.5,192.7 1636.5,189.1 1637.5,192.9 1638.5,196.1 1639.5,201.4 1640.5,193.8 1641.5,193.2 1642.5,193.3 1643.5,197.3 1644.5,195.6 1645.5,195.2 1646.5,198.7 1647.5,191.1 1648.5,189.6 1649.5,190.6 1650.5,192.4 1651.5,195.0 1652.5,197.2 1653.5,198.2 1654.5,196.4 1655.5,198.8 1656.5,202.5 1657.5,189.5 1658.5,187.7 1659.5,192.6 1660.5,193.0 1661.5,195.1 1662.5,202.3 1663.5,191.8 1664.5,189.7 1665.5,191.2 1666.5,193.2 1667.5,192.0 1668.5,191.1 1669.5,187.8 1670.5,188.6 1671.5,192.8 1672.5,192.7 1673.5,191.2 1674.5,189.8 1675.5,193.3 1676.5,194.4 1677.5,194.7 1678.5,195.7 1679.5,194.8 1680.5,195.8 1681.5,192.5 1682.5,190.5 1683.5,194.5 1684.5,194.2 1685.5,192.4 1686.5,191.2 1687.5,197.8 1688.5,191.9 1689.5,192.9 1690.5,195.6 1691.5,187.4 1692.5,189.8 1693.5,197.8 1694.5,199.5 1695.5,195.4 1696.5,191.0 1697.5,191.4 1698.5,190.6 1699.5,194.0 1700.5,205.5 1701.5,194.1 1702.5,192.4 1703.5,191.2 1704.5,190.5 1705.5,199.5 1706.5,192.9 1707.5,188.3 1708.5,190.8 1709.5,194.0 1710.5,191.4 1711.5,190.1 1712.5,192.3 1713.5,196.7 1714.5,195.4 1715.5,196.1 1716.5,201.8 1717.5,201.8 1718.5,224.4 1719.5,221.3 1720.5,222.3 1721.5,221.0 1722.5,227.1 1723.5,224.7 1724.5,221.1 1725.5,221.5 1726.5,223.6 1727.5,221.9 1728.5,221.1 1729.5,224.0 1730.5,216.7 1731.5,214.3 1732.5,216.1 1733.5,219.4 1734.5,217.6 1735.5,219.9 1736.5,221.4 1737.5,221.2 1738.5,220.7 1739.5,219.5 1740.5,218.1 1741.5,217.8 1742.5,222.1 1743.5,223.6 1744.5,224.4 1745.5,219.6 1746.5,221.6 1747.5,224.9 1748.5,218.0 1749.5,217.4 1750.5,222.2 1751.5,218.0 1752.5,219.0 1753.5,221.1 1754.5,221.2 1755.5,221.5 1756.5,219.2 1757.5,220.2 1758.5,221.4 1759.5,220.8 1760.5,221.1 1761.5,219.3 1762.5,218.9 1763.5,221.7 1764.5,225.9 1765.5,218.3 1766.5,219.4 1767.5,218.6 1768.5,218.8 1769.5,222.6 1770.5,222.3 1771.5,221.9 1772.5,220.7 1773.5,218.8 1774.5,227.6 1775.5,220.2 1776.5,220.4 1777.5,218.3 1778.5,219.2 1779.5,219.3 1780.5,221.8 1781.5,216.7 1782.5,216.5 1783.5,217.7 1784.5,215.3 1785.5,215.2 1786.5,215.3 1787.5,216.9 1788.5,218.2 1789.5,216.4 1790.5,214.7 1791.5,217.5 1792.5,217.6 1793.5,217.5 1794.5,218.8 1795.5,217.1 1796.5,218.9 1797.5,220.3 1798.5,220.2 1799.5,216.7 1800.5,218.3 1801.5,219.9 1802.5,217.7 1803.5,217.8 1804.5,216.8 1805.5,214.4 1806.5,216.0 1807.5,219.6 1808.5,218.4 1809.5,216.8 1810.5,215.5 1811.5,214.5 1812.5,214.0 1813.5,218.4 1814.5,214.3 1815.5,216.1 1816.5,217.6 1817.5,216.5 1818.5,216.5 1819.5,217.7 1820.5,217.8 1821.5,221.4 1822.5,219.3 1823.5,223.4 1824.5,220.2 1825.5,216.7 1826.5,215.3 1827.5,217.5 1828.5,220.2 1829.5,216.9 1830.5,220.3 1831.5,219.8 1832.5,218.8 1833.5,215.0 1834.5,214.4 1835.5,213.4 1836.5,214.1 1837.5,221.4 1838.5,214.5 1839.5,216.3 1840.5,220.0" fill="none" stroke="#ececf4" stroke-width="1.6" stroke-linejoin="round"/>
<rect x="829" y="83" width="1014" height="2" fill="#a0a0a0" />
<rect x="829" y="83" width="1" height="191" fill="#a0a0a0" />
<rect x="829" y="273" width="1014" height="1" fill="#a0a0a0" />
<rect x="1841" y="83" width="2" height="191" fill="#a0a0a0" />
<rect x="1336" y="84" width="1" height="189" fill="#f0f040" />
<rect x="1665" y="84" width="1" height="189" fill="#d82020" />
<text x="783.49" y="89.00" font-family="Liberation Sans" font-size="16.00" fill="#ffffff" >40.0</text>
<text x="783.49" y="127.00" font-family="Liberation Sans" font-size="16.00" fill="#ffffff" >20.0</text>
<text x="792.38" y="165.00" font-family="Liberation Sans" font-size="16.00" fill="#ffffff" >0.0</text>
<text x="778.16" y="203.00" font-family="Liberation Sans" font-size="16.00" fill="#ffffff" >-20.0</text>
<text x="778.16" y="241.00" font-family="Liberation Sans" font-size="16.00" fill="#ffffff" >-40.0</text>
<text x="778.16" y="279.00" font-family="Liberation Sans" font-size="16.00" fill="#ffffff" >-60.0</text>
<text x="842.12" y="292.80" font-family="Liberation Sans" font-size="16.00" fill="#ffffff" >226.4</text>
<text x="941.09" y="292.80" font-family="Liberation Sans" font-size="16.00" fill="#ffffff" >226.6</text>
<text x="1039.93" y="292.80" font-family="Liberation Sans" font-size="16.00" fill="#ffffff" >226.8</text>
<text x="1145.51" y="292.80" font-family="Liberation Sans" font-size="16.00" fill="#ffffff" >227</text>
<text x="1237.68" y="292.80" font-family="Liberation Sans" font-size="16.00" fill="#ffffff" >227.2</text>
<text x="1336.37" y="292.80" font-family="Liberation Sans" font-size="16.00" fill="#ffffff" >227.4</text>
<text x="1435.34" y="292.80" font-family="Liberation Sans" font-size="16.00" fill="#ffffff" >227.6</text>
<text x="1534.18" y="292.80" font-family="Liberation Sans" font-size="16.00" fill="#ffffff" >227.8</text>
<text x="1639.70" y="292.80" font-family="Liberation Sans" font-size="16.00" fill="#ffffff" >228</text>
<text x="1731.93" y="292.80" font-family="Liberation Sans" font-size="16.00" fill="#ffffff" >228.2</text>
<text x="1258.04" y="320.30" font-family="Liberation Sans" font-size="20.30" fill="#ffffff" textLength="155.12" lengthAdjust="spacing" >Frequency (MHz)</text>
<text x="-247.86" y="746.60" font-family="Liberation Sans" font-size="20.20" fill="#fff" textLength="137.81" lengthAdjust="spacing" transform="rotate(-90)">Magnitude (dB)</text>
<rect x="0" y="338" width="1879" height="6" fill="#8a8a8a" />
<rect x="0" y="344" width="1879" height="49" fill="#262626" />
<rect x="0" y="393" width="1879" height="1" fill="#e6eef6" />
<text x="9.35" y="378.00" font-family="Liberation Sans" font-size="21.00" fill="#ffffff" font-style="italic" textLength="51.39" lengthAdjust="spacing" >DAB+</text>
<rect x="80.5" y="357.5" width="74" height="26" rx="3" fill="#262626" stroke="#8a8a8a" stroke-width="1"/>
<text x="82.58" y="375.00" font-family="Liberation Sans" font-size="16.00" fill="#ffffff" textLength="28.03" lengthAdjust="spacing" >12C</text>
<polygon points="128.8,366 140.5,366 134.6,373" fill="#ffffff"/>
<rect x="168" y="344" width="146" height="49" fill="#a97617" />
<rect x="168" y="344" width="1" height="49" fill="#e0c080" />
<text x="186.36" y="377.00" font-family="Liberation Sans" font-size="20.00" fill="#f4c470" textLength="80.63" lengthAdjust="spacing" >EId: 9001</text>
<text x="292.16" y="377.00" font-family="Liberation Sans" font-size="20.00" fill="#e8e020" textLength="80.33" lengthAdjust="spacing" >DK DAB1</text>
<text x="397.00" y="377.00" font-family="Liberation Sans" font-size="20.00" fill="#ffffff" textLength="102.01" lengthAdjust="spacing" >2020-01-07</text>
<text x="511.48" y="377.00" font-family="Liberation Sans" font-size="20.00" fill="#ffffff" textLength="89.55" lengthAdjust="spacing" >14:22:24 Z</text>
<rect x="668" y="344" width="3" height="49" fill="#e8e8e8" />
<rect x="684.5" y="357.5" width="30" height="26.5" rx="3" fill="none" stroke="#8a8a8a" stroke-width="1"/>
<polygon points="692.8,366.5 705,366.5 698.9,373.5" fill="#ffffff"/>
<circle cx="759" cy="370.7" r="14.2" fill="#1c5a92"/>
<circle cx="759" cy="370.7" r="5.9" fill="#ff0000"/>
<circle cx="802.6" cy="370.7" r="14.2" fill="#1a3a5c"/>
<rect x="797" y="365" width="11.5" height="11.5" fill="#0a1a2a" />
<rect x="1836.5" y="355.5" width="50" height="26" rx="3" fill="none" stroke="#8a8a8a" stroke-width="1"/>
<text x="1838.33" y="374.00" font-family="Liberation Sans" font-size="15.50" fill="#ffffff" >DAB</text>
<rect x="0" y="394" width="213" height="43" fill="#0e2a4c" />
<rect x="0" y="437" width="213" height="518" fill="#1b5786" />
<rect x="213" y="394" width="6" height="561" fill="#eef2f6" />
<rect x="219" y="394" width="227" height="43" fill="#0e2a4c" />
<rect x="219" y="437" width="227" height="518" fill="#1b5786" />
<rect x="445" y="394" width="1" height="561" fill="#16324e" />
<rect x="446" y="394" width="4" height="561" fill="#c4ccd6" />
<rect x="450" y="394" width="466" height="42" fill="#0e2a4c" />
<rect x="450" y="436" width="466" height="519" fill="#1b5786" />
<rect x="450" y="437" width="1" height="518" fill="#173a5c" />
<rect x="916" y="394" width="6" height="561" fill="#eef2f6" />
<text x="1.95" y="425.00" font-family="Liberation Sans" font-size="25.00" fill="#f0f020" textLength="210.62" lengthAdjust="spacing" >No Service Select</text>
<rect x="213" y="394" width="6" height="561" fill="#eef2f6" />
<text x="224.35" y="425.00" font-family="Liberation Sans" font-size="25.00" fill="#ffffff" textLength="180.09" lengthAdjust="spacing" >Service Quality</text>
<text x="5.19" y="463.20" font-family="Liberation Sans" font-size="19.00" fill="#ffffff" textLength="85.75" lengthAdjust="spacing" >_myROCK</text>
<text x="5.19" y="494.65" font-family="Liberation Sans" font-size="19.00" fill="#ffffff" textLength="61.05" lengthAdjust="spacing" >_NOVA</text>
<text x="5.19" y="526.10" font-family="Liberation Sans" font-size="19.00" fill="#ffffff" textLength="76.08" lengthAdjust="spacing" >_Pop FM</text>
<text x="5.19" y="557.55" font-family="Liberation Sans" font-size="19.00" fill="#ffffff" textLength="96.86" lengthAdjust="spacing" >_Radio 100</text>
<text x="5.19" y="589.00" font-family="Liberation Sans" font-size="19.00" fill="#ffffff" textLength="99.14" lengthAdjust="spacing" >_Radio Soft</text>
<text x="5.19" y="620.45" font-family="Liberation Sans" font-size="19.00" fill="#ffffff" textLength="93.66" lengthAdjust="spacing" >_The Voice</text>
<text x="4.14" y="651.90" font-family="Liberation Sans" font-size="19.00" fill="#ffffff" textLength="157.19" lengthAdjust="spacing" >BBC WorldService</text>
<text x="4.90" y="683.35" font-family="Liberation Sans" font-size="19.00" fill="#ffffff" textLength="66.19" lengthAdjust="spacing" >dk4dab</text>
<text x="4.14" y="714.80" font-family="Liberation Sans" font-size="19.00" fill="#ffffff" textLength="124.94" lengthAdjust="spacing" >ENERGY (NRJ)</text>
<text x="4.14" y="746.25" font-family="Liberation Sans" font-size="19.00" fill="#ffffff" textLength="97.97" lengthAdjust="spacing" >MTV Radio</text>
<text x="231.75" y="472.70" font-family="Liberation Sans" font-size="18.50" fill="#ffffff" textLength="69.60" lengthAdjust="spacing" >SNR (dB)</text>
<rect x="382" y="450.0" width="50" height="31.5" fill="#808080" />
<rect x="382" y="450.0" width="15" height="31.5" fill="#ffa500" />
<text x="393.12" y="471.80" font-family="Liberation Sans" font-size="15.50" fill="#ffffff" textLength="28.26" lengthAdjust="spacing" >10.2</text>
<text x="231.08" y="511.35" font-family="Liberation Sans" font-size="18.50" fill="#ffffff" textLength="79.26" lengthAdjust="spacing" >FIC (ok %)</text>
<rect x="382" y="488.65" width="50" height="31.5" fill="#808080" />
<rect x="382" y="488.65" width="50" height="31.5" fill="#008000" />
<text x="398.57" y="510.45" font-family="Liberation Sans" font-size="15.50" fill="#ffffff" textLength="17.36" lengthAdjust="spacing" >99</text>
<text x="231.08" y="550.00" font-family="Liberation Sans" font-size="18.50" fill="#ffffff" textLength="75.17" lengthAdjust="spacing" >RS (ok %)</text>
<rect x="382" y="527.3" width="50" height="31.5" fill="#808080" />
<text x="231.08" y="588.65" font-family="Liberation Sans" font-size="18.50" fill="#ffffff" textLength="95.76" lengthAdjust="spacing" >Null Symbol</text>
<rect x="382" y="565.95" width="50" height="31.5" fill="#808080" />
<rect x="382" y="565.95" width="50" height="31.5" fill="#008000" />
<text x="231.75" y="627.30" font-family="Liberation Sans" font-size="18.50" fill="#ffffff" textLength="133.81" lengthAdjust="spacing" >SymbolTime (ms)</text>
<rect x="382" y="604.6" width="50" height="31.5" fill="#808080" />
<rect x="382" y="604.6" width="9" height="31.5" fill="#008000" />
<text x="392.60" y="626.40" font-family="Liberation Sans" font-size="15.50" fill="#ffffff" textLength="28.17" lengthAdjust="spacing" >0.31</text>
<text x="231.08" y="665.95" font-family="Liberation Sans" font-size="18.50" fill="#ffffff" textLength="125.47" lengthAdjust="spacing" >FrameTime (ms)</text>
<rect x="382" y="643.25" width="50" height="31.5" fill="#808080" />
<rect x="382" y="643.25" width="31.8" height="31.5" fill="#008000" />
<text x="392.47" y="665.05" font-family="Liberation Sans" font-size="15.50" fill="#ffffff" textLength="29.09" lengthAdjust="spacing" >96.1</text>
<path d="M460.5 436.5 L460.5 407.5 Q460.5 403.5 464.5 403.5 L522 403.5 Q534 403.5 534 415.5 L534 436.5 Z" fill="#808080" stroke="#8c8c8c" stroke-width="1"/>
<path d="M589.5 436.5 L589.5 407.5 Q589.5 403.5 593.5 403.5 L665 403.5 Q677 403.5 677 415.5 L677 436.5 Z" fill="#808080" stroke="#8c8c8c" stroke-width="1"/>
<path d="M678 436.5 L678 407.5 Q678 403.5 682 403.5 L737 403.5 Q749 403.5 749 415.5 L749 436.5 Z" fill="#808080" stroke="#8c8c8c" stroke-width="1"/>
<path d="M750 436.5 L750 407.5 Q750 403.5 754 403.5 L845 403.5 Q857 403.5 857 415.5 L857 436.5 Z" fill="#808080" stroke="#8c8c8c" stroke-width="1"/>
<path d="M535.5 436.5 L535.5 407.5 Q535.5 403.5 539.5 403.5 L577 403.5 Q589 403.5 589 415.5 L589 436.5 Z" fill="#1b5786" stroke="#3a6a96" stroke-width="1"/>
<rect x="536" y="434" width="53" height="4" fill="#1b5786" />
<text x="475.03" y="430.00" font-family="Liberation Sans" font-size="21.00" fill="#e4e4e4" >Sync</text>
<text x="549.54" y="430.00" font-family="Liberation Sans" font-size="21.00" fill="#ffffff" >TII</text>
<text x="605.96" y="430.00" font-family="Liberation Sans" font-size="21.00" fill="#e4e4e4" >Audio</text>
<text x="693.96" y="430.00" font-family="Liberation Sans" font-size="21.00" fill="#e4e4e4" >AAC</text>
<text x="766.01" y="430.00" font-family="Liberation Sans" font-size="21.00" fill="#e4e4e4" >Options</text>
<circle cx="499" cy="455.7" r="5.8" fill="#ff0000"/>
<rect x="529.7" y="449.3" width="11" height="12" fill="#0f2a45" />
<rect x="467.8" y="474" width="310" height="1" fill="#8fb4d4" />
<rect x="790.5" y="436" width="1" height="39" fill="#5f8fb8" />
<text x="796.60" y="477.00" font-family="Liberation Sans" font-size="18.00" fill="#ffffff" textLength="77.54" lengthAdjust="spacing" >Threshold</text>
<text x="467.14" y="514.40" font-family="Liberation Sans" font-size="19.00" fill="#ffffff" >Pattern</text>
<text x="551.44" y="514.40" font-family="Liberation Sans" font-size="19.00" fill="#ffffff" >MainId</text>
<text x="634.33" y="514.40" font-family="Liberation Sans" font-size="19.00" fill="#ffffff" >SubId</text>
<text x="706.93" y="514.40" font-family="Liberation Sans" font-size="19.00" fill="#ffffff" >Strength</text>
<rect x="468" y="519" width="310" height="1.3" fill="#a8c4dc" />
<text x="469.66" y="551.70" font-family="Liberation Sans" font-size="19.00" fill="#ffffff" >0x1b</text>
<text x="554.05" y="551.70" font-family="Liberation Sans" font-size="19.00" fill="#ffffff" >2</text>
<text x="636.56" y="551.70" font-family="Liberation Sans" font-size="19.00" fill="#ffffff" >10</text>
<text x="709.26" y="551.70" font-family="Liberation Sans" font-size="19.00" fill="#ffffff" >0.88</text>
<text x="469.66" y="582.80" font-family="Liberation Sans" font-size="19.00" fill="#ffffff" >0x1d</text>
<text x="554.28" y="582.80" font-family="Liberation Sans" font-size="19.00" fill="#ffffff" >3</text>
<text x="636.56" y="582.80" font-family="Liberation Sans" font-size="19.00" fill="#ffffff" >13</text>
<text x="709.26" y="582.80" font-family="Liberation Sans" font-size="19.00" fill="#ffffff" >0.16</text>
<rect x="830.3" y="500.5" width="2.4" height="132" fill="#d4e4f2" rx="1.2"/>
<circle cx="831.5" cy="640.8" r="7.9" fill="url(#thumb)"/>
<text x="813.50" y="675.00" font-family="Liberation Sans" font-size="18.00" fill="#ffffff" textLength="33.41" lengthAdjust="spacing" >0.02</text>
<rect x="922" y="394" width="957" height="25" fill="#0e2a4c" />
<rect x="922" y="419" width="957" height="274" fill="#000000" />
<text x="1286.23" y="412.10" font-family="Liberation Sans" font-size="19.00" fill="#ffffff" textLength="266.95" lengthAdjust="spacing" >Channel Impulse Response (CIR)</text>
<path d="M1873 399.6 L1879 399.6 M1873.2 399.6 L1879 408.8" stroke="#c8d8ec" stroke-width="1.2" fill="none"/>
<circle cx="943" cy="441.5" r="8.2" fill="#e6e6e6"/>
<text x="954.84" y="448.00" font-family="Liberation Sans" font-size="15.40" fill="#ffffff" textLength="44.05" lengthAdjust="spacing" >Freeze</text>
<circle cx="1031.8" cy="441.5" r="8.2" fill="#e6e6e6"/>
<text x="1044.63" y="448.00" font-family="Liberation Sans" font-size="15.40" fill="#ffffff" textLength="57.27" lengthAdjust="spacing" >Gradient</text>
<text x="940.41" y="498.70" font-family="Liberation Sans" font-size="15.00" fill="#ffffff" textLength="111.80" lengthAdjust="spacing" >Smoothing Level</text>
<rect x="943" y="509" width="1" height="5" fill="#d0d0d0" />
<rect x="960" y="509" width="1" height="5" fill="#d0d0d0" />
<rect x="976" y="509" width="1" height="5" fill="#d0d0d0" />
<rect x="992" y="509" width="1" height="5" fill="#d0d0d0" />
<rect x="1009" y="509" width="1" height="5" fill="#d0d0d0" />
<rect x="1025" y="509" width="1" height="5" fill="#d0d0d0" />
<rect x="1041" y="509" width="1" height="5" fill="#d0d0d0" />
<rect x="1058" y="509" width="1" height="5" fill="#d0d0d0" />
<rect x="1074" y="509" width="1" height="5" fill="#d0d0d0" />
<rect x="1090" y="509" width="1" height="5" fill="#d0d0d0" />
<rect x="1106" y="509" width="1" height="5" fill="#d0d0d0" />
<rect x="935" y="521.5" width="172" height="3" fill="#e0e0e0" rx="1.5"/>
<circle cx="1025.2" cy="523" r="8.2" fill="url(#thumb)"/>
<text x="940.52" y="566.30" font-family="Liberation Sans" font-size="15.00" fill="#ffffff" >Zoom X</text>
<rect x="935" y="583.5" width="172" height="3" fill="#e0e0e0" rx="1.5"/>
<circle cx="943.6" cy="584.8" r="8.2" fill="url(#thumb)"/>
<text x="940.52" y="629.30" font-family="Liberation Sans" font-size="15.00" fill="#ffffff" >Zoom Y</text>
<rect x="935" y="646" width="172" height="3" fill="#e0e0e0" rx="1.5"/>
<circle cx="943.6" cy="647.5" r="8.2" fill="url(#thumb)"/>
<text x="940.82" y="691.00" font-family="Liberation Sans" font-size="15.00" fill="#ffffff" >x-Axis</text>
<rect x="1115" y="421" width="6" height="206" fill="#a8a8a8" rx="3"/>
<rect x="1128.5" y="419" width="1" height="274" fill="#262626" />
<rect x="1378" y="440" width="18" height="194" fill="#404040" />
<rect x="1246" y="478" width="618" height="1" fill="#858585" />
<rect x="1246" y="517" width="618" height="1" fill="#858585" />
<rect x="1246" y="557" width="618" height="1" fill="#858585" />
<rect x="1246" y="596" width="618" height="1" fill="#858585" />
<rect x="1273" y="440" width="1" height="194" fill="#858585" />
<rect x="1315" y="440" width="1" height="194" fill="#858585" />
<rect x="1356" y="440" width="1" height="194" fill="#858585" />
<rect x="1397" y="440" width="1" height="194" fill="#858585" />
<rect x="1439" y="440" width="1" height="194" fill="#858585" />
<rect x="1480" y="440" width="1" height="194" fill="#858585" />
<rect x="1521" y="440" width="1" height="194" fill="#858585" />
<rect x="1563" y="440" width="1" height="194" fill="#858585" />
<rect x="1604" y="440" width="1" height="194" fill="#858585" />
<rect x="1645" y="440" width="1" height="194" fill="#858585" />
<rect x="1687" y="440" width="1" height="194" fill="#858585" />
<rect x="1728" y="440" width="1" height="194" fill="#858585" />
<rect x="1770" y="440" width="1" height="194" fill="#858585" />
<rect x="1811" y="440" width="1" height="194" fill="#858585" />
<rect x="1852" y="440" width="1" height="194" fill="#858585" />
<rect x="1244" y="438" width="621" height="2" fill="#a0a0a0" />
<rect x="1244" y="634" width="621" height="1" fill="#a0a0a0" />
<rect x="1863" y="438" width="2" height="197" fill="#a0a0a0" />
<rect x="1244" y="438" width="2" height="197" fill="#d05048" />
<rect x="1397" y="440" width="1" height="1.5" fill="#e0e020" />
<rect x="1397" y="443" width="1" height="1.5" fill="#e0e020" />
<rect x="1397" y="446" width="1" height="1.5" fill="#e0e020" />
<rect x="1397" y="449" width="1" height="1.5" fill="#e0e020" />
<rect x="1397" y="452" width="1" height="1.5" fill="#e0e020" />
<rect x="1397" y="455" width="1" height="1.5" fill="#e0e020" />
<rect x="1397" y="458" width="1" height="1.5" fill="#e0e020" />
<rect x="1397" y="461" width="1" height="1.5" fill="#e0e020" />
<rect x="1397" y="464" width="1" height="1.5" fill="#e0e020" />
<rect x="1397" y="467" width="1" height="1.5" fill="#e0e020" />
<rect x="1397" y="470" width="1" height="1.5" fill="#e0e020" />
<rect x="1397" y="473" width="1" height="1.5" fill="#e0e020" />
<rect x="1397" y="476" width="1" height="1.5" fill="#e0e020" />
<rect x="1397" y="479" width="1" height="1.5" fill="#e0e020" />
<rect x="1397" y="482" width="1" height="1.5" fill="#e0e020" />
<rect x="1397" y="485" width="1" height="1.5" fill="#e0e020" />
<rect x="1397" y="488" width="1" height="1.5" fill="#e0e020" />
<rect x="1397" y="491" width="1" height="1.5" fill="#e0e020" />
<rect x="1397" y="494" width="1" height="1.5" fill="#e0e020" />
<rect x="1397" y="497" width="1" height="1.5" fill="#e0e020" />
<rect x="1397" y="500" width="1" height="1.5" fill="#e0e020" />
<rect x="1397" y="503" width="1" height="1.5" fill="#e0e020" />
<rect x="1397" y="506" width="1" height="1.5" fill="#e0e020" />
<rect x="1397" y="509" width="1" height="1.5" fill="#e0e020" />
<rect x="1397" y="512" width="1" height="1.5" fill="#e0e020" />
<rect x="1397" y="515" width="1" height="1.5" fill="#e0e020" />
<rect x="1397" y="518" width="1" height="1.5" fill="#e0e020" />
<rect x="1397" y="521" width="1" height="1.5" fill="#e0e020" />
<rect x="1397" y="524" width="1" height="1.5" fill="#e0e020" />
<rect x="1397" y="527" width="1" height="1.5" fill="#e0e020" />
<rect x="1397" y="530" width="1" height="1.5" fill="#e0e020" />
<rect x="1397" y="533" width="1" height="1.5" fill="#e0e020" />
<rect x="1397" y="536" width="1" height="1.5" fill="#e0e020" />
<rect x="1397" y="539" width="1" height="1.5" fill="#e0e020" />
<rect x="1397" y="542" width="1" height="1.5" fill="#e0e020" />
<rect x="1397" y="545" width="1" height="1.5" fill="#e0e020" />
<rect x="1397" y="548" width="1" height="1.5" fill="#e0e020" />
<rect x="1397" y="551" width="1" height="1.5" fill="#e0e020" />
<rect x="1397" y="554" width="1" height="1.5" fill="#e0e020" />
<rect x="1397" y="557" width="1" height="1.5" fill="#e0e020" />
<rect x="1397" y="560" width="1" height="1.5" fill="#e0e020" />
<rect x="1397" y="563" width="1" height="1.5" fill="#e0e020" />
<rect x="1397" y="566" width="1" height="1.5" fill="#e0e020" />
<rect x="1397" y="569" width="1" height="1.5" fill="#e0e020" />
<rect x="1397" y="572" width="1" height="1.5" fill="#e0e020" />
<rect x="1397" y="575" width="1" height="1.5" fill="#e0e020" />
<rect x="1397" y="578" width="1" height="1.5" fill="#e0e020" />
<rect x="1397" y="581" width="1" height="1.5" fill="#e0e020" />
<rect x="1397" y="584" width="1" height="1.5" fill="#e0e020" />
<rect x="1397" y="587" width="1" height="1.5" fill="#e0e020" />
<rect x="1397" y="590" width="1" height="1.5" fill="#e0e020" />
<rect x="1397" y="593" width="1" height="1.5" fill="#e0e020" />
<rect x="1397" y="596" width="1" height="1.5" fill="#e0e020" />
<rect x="1397" y="599" width="1" height="1.5" fill="#e0e020" />
<rect x="1397" y="602" width="1" height="1.5" fill="#e0e020" />
<rect x="1397" y="605" width="1" height="1.5" fill="#e0e020" />
<rect x="1397" y="608" width="1" height="1.5" fill="#e0e020" />
<rect x="1397" y="611" width="1" height="1.5" fill="#e0e020" />
<rect x="1397" y="614" width="1" height="1.5" fill="#e0e020" />
<rect x="1397" y="617" width="1" height="1.5" fill="#e0e020" />
<rect x="1397" y="620" width="1" height="1.5" fill="#e0e020" />
<rect x="1397" y="623" width="1" height="1.5" fill="#e0e020" />
<rect x="1397" y="626" width="1" height="1.5" fill="#e0e020" />
<rect x="1397" y="629" width="1" height="1.5" fill="#e0e020" />
<rect x="1397" y="632" width="1" height="1.5" fill="#e0e020" />
<polyline points="1245.3,601.1 1246.3,592.1 1247.4,592.3 1248.4,600.9 1249.4,611.4 1250.5,610.8 1251.5,601.7 1252.5,593.5 1253.6,591.5 1254.6,595.8 1255.6,597.8 1256.7,600.9 1257.7,602.2 1258.7,599.6 1259.8,600.4 1260.8,596.6 1261.8,589.3 1262.9,590.5 1263.9,596.9 1264.9,595.7 1266.0,591.8 1267.0,595.5 1268.0,600.1 1269.1,594.0 1270.1,586.7 1271.2,588.7 1272.2,592.8 1273.2,591.0 1274.3,593.2 1275.3,601.0 1276.3,608.3 1277.4,605.5 1278.4,603.4 1279.4,605.2 1280.5,608.2 1281.5,607.1 1282.5,603.7 1283.6,603.6 1284.6,608.5 1285.6,611.9 1286.7,611.3 1287.7,607.4 1288.7,603.2 1289.8,598.6 1290.8,589.8 1291.8,585.0 1292.9,589.2 1293.9,599.7 1294.9,598.9 1296.0,586.5 1297.0,581.1 1298.0,584.9 1299.1,590.0 1300.1,587.4 1301.1,589.7 1302.2,597.3 1303.2,591.1 1304.2,580.6 1305.3,581.2 1306.3,595.4 1307.3,612.3 1308.4,608.3 1309.4,610.2 1310.4,607.3 1311.5,600.3 1312.5,598.7 1313.5,601.6 1314.6,605.2 1315.6,609.7 1316.6,608.7 1317.7,602.9 1318.7,602.9 1319.8,605.2 1320.8,597.9 1321.8,590.7 1322.9,591.9 1323.9,596.0 1324.9,595.2 1326.0,598.0 1327.0,606.9 1328.0,612.1 1329.1,606.1 1330.1,603.1 1331.1,603.8 1332.2,598.8 1333.2,590.5 1334.2,588.5 1335.3,595.2 1336.3,596.4 1337.3,589.6 1338.4,590.3 1339.4,595.4 1340.4,595.7 1341.5,594.0 1342.5,594.8 1343.5,600.0 1344.6,605.8 1345.6,602.8 1346.6,603.4 1347.7,605.8 1348.7,596.3 1349.7,589.5 1350.8,594.8 1351.8,598.2 1352.8,593.8 1353.9,595.6 1354.9,600.9 1355.9,604.2 1357.0,603.2 1358.0,601.5 1359.0,598.8 1360.1,591.6 1361.1,588.6 1362.1,595.4 1363.2,601.1 1364.2,598.2 1365.2,590.5 1366.3,586.7 1367.3,591.8 1368.3,597.5 1369.4,594.5 1370.4,594.7 1371.5,599.3 1372.5,602.4 1373.5,601.2 1374.6,597.6 1375.6,597.0 1376.6,597.5 1377.7,595.8 1378.7,591.1 1379.7,586.8 1380.8,589.4 1381.8,600.1 1382.8,611.8 1383.9,598.6 1384.9,589.5 1385.9,587.5 1387.0,590.1 1388.0,596.9 1389.0,604.4 1390.1,601.1 1391.1,596.1 1392.1,594.3 1393.2,596.2 1394.2,599.2 1395.2,586.2 1396.3,567.9 1397.3,534.9 1398.3,510.6 1399.4,513.7 1400.4,550.1 1401.4,580.2 1402.5,587.1 1403.5,581.5 1404.5,568.9 1405.6,558.3 1406.6,559.7 1407.6,571.7 1408.7,583.8 1409.7,595.9 1410.7,604.5 1411.8,604.9 1412.8,601.3 1413.8,599.9 1414.9,603.7 1415.9,602.1 1416.9,594.7 1418.0,593.8 1419.0,599.7 1420.0,606.2 1421.1,608.3 1422.1,602.7 1423.1,599.0 1424.2,600.8 1425.2,607.7 1426.3,613.5 1427.3,608.1 1428.3,599.0 1429.4,589.3 1430.4,584.4 1431.4,585.4 1432.5,588.6 1433.5,593.7 1434.5,599.3 1435.6,598.1 1436.6,595.4 1437.6,597.3 1438.7,602.0 1439.7,601.5 1440.7,596.5 1441.8,593.8 1442.8,591.7 1443.8,590.5 1444.9,595.7 1445.9,600.2 1446.9,600.7 1448.0,579.5 1449.0,561.8 1450.0,559.3 1451.1,576.1 1452.1,588.8 1453.1,595.0 1454.2,585.3 1455.2,576.6 1456.2,569.0 1457.3,576.6 1458.3,587.6 1459.3,596.2 1460.4,596.6 1461.4,593.8 1462.4,591.8 1463.5,589.3 1464.5,581.9 1465.5,576.8 1466.6,581.9 1467.6,589.3 1468.6,593.2 1469.7,596.3 1470.7,604.2 1471.7,602.8 1472.8,587.6 1473.8,576.6 1474.8,569.0 1475.9,576.6 1476.9,587.6 1478.0,596.0 1479.0,590.3 1480.0,585.6 1481.1,587.2 1482.1,595.8 1483.1,598.0 1484.2,595.0 1485.2,595.5 1486.2,598.1 1487.3,597.1 1488.3,593.2 1489.3,596.3 1490.4,599.2 1491.4,579.8 1492.4,551.3 1493.5,531.6 1494.5,551.3 1495.5,579.8 1496.6,592.7 1497.6,599.6 1498.6,591.7 1499.7,585.8 1500.7,585.7 1501.7,575.2 1502.8,569.0 1503.8,575.2 1504.8,585.7 1505.9,596.4 1506.9,592.8 1507.9,585.4 1509.0,581.4 1510.0,586.5 1511.0,599.1 1512.1,600.9 1513.1,597.9 1514.1,600.6 1515.2,603.6 1516.2,596.8 1517.2,592.2 1518.3,596.0 1519.3,602.9 1520.3,606.3 1521.4,604.2 1522.4,582.4 1523.4,570.9 1524.5,563.7 1525.5,565.7 1526.5,566.6 1527.6,556.9 1528.6,544.0 1529.7,542.7 1530.7,555.5 1531.7,568.8 1532.8,569.7 1533.8,567.2 1534.8,576.3 1535.9,587.6 1536.9,601.2 1537.9,599.7 1539.0,598.9 1540.0,597.7 1541.0,594.6 1542.1,596.7 1543.1,601.1 1544.1,598.9 1545.2,598.7 1546.2,600.5 1547.2,599.8 1548.3,593.2 1549.3,588.0 1550.3,594.0 1551.4,596.1 1552.4,587.1 1553.4,588.0 1554.5,592.1 1555.5,585.2 1556.5,582.5 1557.6,581.6 1558.6,578.8 1559.6,582.8 1560.7,597.1 1561.7,609.8 1562.7,598.3 1563.8,590.6 1564.8,594.3 1565.8,604.0 1566.9,604.4 1567.9,601.7 1568.9,603.6 1570.0,595.8 1571.0,590.2 1572.0,596.1 1573.1,600.4 1574.1,603.2 1575.1,606.8 1576.2,601.8 1577.2,592.2 1578.2,585.4 1579.3,583.4 1580.3,584.1 1581.4,585.8 1582.4,581.4 1583.4,580.0 1584.5,588.0 1585.5,599.1 1586.5,596.4 1587.6,589.0 1588.6,587.6 1589.6,591.7 1590.7,599.3 1591.7,606.7 1592.7,601.3 1593.8,596.7 1594.8,598.0 1595.8,602.4 1596.9,603.3 1597.9,601.4 1598.9,596.5 1600.0,591.6 1601.0,588.1 1602.0,584.3 1603.1,585.3 1604.1,595.0 1605.1,604.0 1606.2,604.3 1607.2,602.5 1608.2,602.6 1609.3,592.4 1610.3,583.2 1611.3,584.6 1612.4,588.4 1613.4,583.8 1614.4,582.0 1615.5,587.7 1616.5,589.9 1617.5,587.9 1618.6,596.3 1619.6,605.1 1620.6,602.8 1621.7,606.9 1622.7,603.3 1623.7,597.9 1624.8,598.6 1625.8,597.0 1626.8,593.3 1627.9,594.9 1628.9,598.6 1630.0,603.4 1631.0,602.9 1632.0,600.3 1633.1,603.7 1634.1,607.1 1635.1,601.0 1636.2,598.7 1637.2,600.4 1638.2,602.9 1639.3,599.2 1640.3,589.0 1641.3,585.5 1642.4,592.9 1643.4,603.4 1644.4,603.9 1645.5,592.5 1646.5,580.5 1647.5,578.4 1648.6,584.9 1649.6,594.9 1650.6,601.6 1651.7,612.8 1652.7,605.1 1653.7,598.3 1654.8,595.8 1655.8,595.8 1656.8,598.6 1657.9,597.4 1658.9,594.7 1659.9,599.9 1661.0,608.1 1662.0,603.5 1663.0,603.1 1664.1,606.3 1665.1,608.4 1666.1,610.3 1667.2,613.6 1668.2,593.1 1669.2,579.1 1670.3,576.9 1671.3,582.8 1672.3,593.0 1673.4,596.8 1674.4,593.2 1675.4,595.8 1676.5,596.3 1677.5,590.3 1678.5,591.7 1679.6,596.4 1680.6,597.4 1681.7,596.8 1682.7,590.6 1683.7,588.9 1684.8,595.2 1685.8,597.3 1686.8,596.0 1687.9,593.2 1688.9,593.2 1689.9,598.5 1691.0,602.4 1692.0,599.9 1693.0,591.2 1694.1,585.2 1695.1,588.2 1696.1,595.7 1697.2,594.7 1698.2,594.4 1699.2,596.2 1700.3,596.9 1701.3,600.3 1702.3,600.3 1703.4,598.4 1704.4,602.0 1705.4,603.4 1706.5,598.0 1707.5,597.9 1708.5,603.2 1709.6,609.2 1710.6,613.5 1711.6,617.3 1712.7,604.2 1713.7,590.9 1714.7,586.3 1715.8,595.5 1716.8,609.9 1717.8,602.4 1718.9,598.0 1719.9,600.9 1720.9,599.3 1722.0,591.5 1723.0,591.2 1724.0,596.8 1725.1,594.7 1726.1,591.1 1727.1,595.5 1728.2,598.4 1729.2,599.9 1730.2,599.8 1731.3,596.0 1732.3,591.7 1733.3,585.8 1734.4,584.2 1735.4,594.2 1736.5,612.6 1737.5,606.7 1738.5,602.7 1739.6,602.0 1740.6,601.5 1741.6,604.1 1742.7,605.8 1743.7,595.4 1744.7,584.6 1745.8,582.9 1746.8,589.1 1747.8,600.1 1748.9,609.8 1749.9,612.2 1750.9,605.0 1752.0,600.9 1753.0,604.1 1754.0,607.2 1755.1,604.5 1756.1,600.2 1757.1,594.3 1758.2,592.8 1759.2,596.9 1760.2,599.2 1761.3,600.6 1762.3,602.2 1763.3,598.7 1764.4,596.8 1765.4,599.5 1766.4,604.6 1767.5,607.0 1768.5,602.8 1769.5,599.4 1770.6,599.3 1771.6,599.5 1772.6,600.0 1773.7,605.2 1774.7,613.3 1775.7,607.7 1776.8,603.0 1777.8,604.0 1778.8,606.5 1779.9,603.9 1780.9,602.7 1781.9,601.2 1783.0,599.0 1784.0,596.3 1785.0,591.6 1786.1,593.3 1787.1,597.6 1788.2,596.0 1789.2,595.7 1790.2,598.3 1791.3,599.8 1792.3,591.3 1793.3,585.1 1794.4,591.7 1795.4,598.8 1796.4,590.0 1797.5,581.8 1798.5,578.4 1799.5,580.2 1800.6,586.2 1801.6,594.9 1802.6,599.9 1803.7,599.9 1804.7,601.2 1805.7,601.7 1806.8,599.9 1807.8,600.7 1808.8,598.2 1809.9,594.6 1810.9,597.2 1811.9,605.8 1813.0,612.3 1814.0,600.8 1815.0,594.9 1816.1,590.6 1817.1,590.6 1818.1,597.6 1819.2,607.9 1820.2,611.9 1821.2,607.8 1822.3,602.6 1823.3,602.2 1824.3,601.6 1825.4,596.1 1826.4,593.9 1827.4,597.2 1828.5,595.4 1829.5,589.6 1830.5,590.1 1831.6,595.3 1832.6,598.4 1833.6,599.6 1834.7,593.5 1835.7,587.6 1836.8,591.5 1837.8,598.7 1838.8,601.9 1839.9,600.1 1840.9,597.9 1841.9,596.6 1843.0,594.4 1844.0,595.4 1845.0,597.2 1846.1,594.5 1847.1,588.2 1848.1,584.7 1849.2,587.3 1850.2,593.3 1851.2,585.0 1852.3,580.8 1853.3,587.3 1854.3,597.0 1855.4,593.9 1856.4,584.5 1857.4,583.1 1858.5,589.7 1859.5,594.7 1860.5,597.5 1861.6,600.8 1862.6,606.0" fill="none" stroke="#ececec" stroke-width="1.3" stroke-linejoin="round"/>
<circle cx="1398" cy="516" r="4.6" fill="#ffff00"/>
<circle cx="1449.5" cy="559" r="4.6" fill="#7a30e0"/>
<circle cx="1494.5" cy="535" r="4.6" fill="#ff0000"/>
<circle cx="1529.5" cy="543" r="4.6" fill="#10a0e0"/>
<text x="1197.96" y="444.80" font-family="Liberation Sans" font-size="16.00" fill="#ffffff" >-10.0</text>
<text x="1197.96" y="484.12" font-family="Liberation Sans" font-size="16.00" fill="#ffffff" >-20.0</text>
<text x="1197.96" y="523.44" font-family="Liberation Sans" font-size="16.00" fill="#ffffff" >-30.0</text>
<text x="1197.96" y="562.76" font-family="Liberation Sans" font-size="16.00" fill="#ffffff" >-40.0</text>
<text x="1197.96" y="602.08" font-family="Liberation Sans" font-size="16.00" fill="#ffffff" >-50.0</text>
<text x="1197.96" y="641.40" font-family="Liberation Sans" font-size="16.00" fill="#ffffff" >-60.0</text>
<text x="1263.07" y="651.70" font-family="Liberation Sans" font-size="14.00" fill="#ffffff" >-60</text>
<text x="1304.43" y="651.70" font-family="Liberation Sans" font-size="14.00" fill="#ffffff" >-40</text>
<text x="1345.79" y="651.70" font-family="Liberation Sans" font-size="14.00" fill="#ffffff" >-20</text>
<text x="1393.41" y="651.70" font-family="Liberation Sans" font-size="14.00" fill="#ffffff" >0</text>
<text x="1430.80" y="651.70" font-family="Liberation Sans" font-size="14.00" fill="#ffffff" >20</text>
<text x="1472.35" y="651.70" font-family="Liberation Sans" font-size="14.00" fill="#ffffff" >40</text>
<text x="1513.51" y="651.70" font-family="Liberation Sans" font-size="14.00" fill="#ffffff" >60</text>
<text x="1554.93" y="651.70" font-family="Liberation Sans" font-size="14.00" fill="#ffffff" >80</text>
<text x="1592.16" y="651.70" font-family="Liberation Sans" font-size="14.00" fill="#ffffff" >100</text>
<text x="1633.53" y="651.70" font-family="Liberation Sans" font-size="14.00" fill="#ffffff" >120</text>
<text x="1674.88" y="651.70" font-family="Liberation Sans" font-size="14.00" fill="#ffffff" >140</text>
<text x="1716.24" y="651.70" font-family="Liberation Sans" font-size="14.00" fill="#ffffff" >160</text>
<text x="1757.61" y="651.70" font-family="Liberation Sans" font-size="14.00" fill="#ffffff" >180</text>
<text x="1799.15" y="651.70" font-family="Liberation Sans" font-size="14.00" fill="#ffffff" >200</text>
<text x="1840.51" y="651.70" font-family="Liberation Sans" font-size="14.00" fill="#ffffff" >220</text>
<text x="1460.11" y="676.60" font-family="Liberation Sans" font-size="17.00" fill="#ffffff" textLength="189.25" lengthAdjust="spacing" >Distance Difference (km)</text>
<text x="-594.31" y="1175.50" font-family="Liberation Sans" font-size="16.50" fill="#fff" font-weight="bold" textLength="114.14" lengthAdjust="spacing" transform="rotate(-90)">Magnitude (dB)</text>
<rect x="922" y="693" width="957" height="6" fill="#8a8a8a" />
<rect x="922" y="699" width="957" height="25" fill="#0e2a4c" />
<rect x="922" y="724" width="957" height="231" fill="#000000" />
<text x="1377.08" y="717.00" font-family="Liberation Sans" font-size="19.00" fill="#ffffff" textLength="86.90" lengthAdjust="spacing" >TII Carriers</text>
<path d="M1873 704.6 L1879 704.6 M1873.2 704.6 L1879 713.8" stroke="#c8d8ec" stroke-width="1.2" fill="none"/>
<rect x="1033" y="776" width="823" height="1" fill="#858585" />
<rect x="1033" y="809" width="823" height="1" fill="#858585" />
<rect x="1033" y="842" width="823" height="1" fill="#858585" />
<rect x="1033" y="876" width="823" height="1" fill="#858585" />
<rect x="1082" y="744" width="1" height="163" fill="#858585" />
<rect x="1163" y="744" width="1" height="163" fill="#858585" />
<rect x="1243" y="744" width="1" height="163" fill="#858585" />
<rect x="1323" y="744" width="1" height="163" fill="#858585" />
<rect x="1404" y="744" width="1" height="163" fill="#858585" />
<rect x="1484" y="744" width="1" height="163" fill="#858585" />
<rect x="1565" y="744" width="1" height="163" fill="#858585" />
<rect x="1645" y="744" width="1" height="163" fill="#858585" />
<rect x="1726" y="744" width="1" height="163" fill="#858585" />
<rect x="1806" y="744" width="1" height="163" fill="#858585" />
<rect x="1032" y="742" width="825" height="2" fill="#a0a0a0" />
<rect x="1032" y="906" width="825" height="2" fill="#a0a0a0" />
<rect x="1855" y="742" width="2" height="166" fill="#a0a0a0" />
<rect x="1032" y="742" width="1" height="166" fill="#a0a0a0" />
<rect x="1033" y="742" width="1.6" height="168" fill="#c02818" />
<rect x="1034" y="905" width="101" height="1" fill="#d8d8d8" />
<rect x="1134.5" y="744.0" width="2" height="2" fill="#e8e818"/>
<rect x="1134.5" y="747.2" width="2" height="2" fill="#e8e818"/>
<rect x="1134.5" y="750.4" width="2" height="2" fill="#e8e818"/>
<rect x="1134.5" y="753.6" width="2" height="2" fill="#e8e818"/>
<rect x="1134.5" y="756.8" width="2" height="2" fill="#e8e818"/>
<rect x="1134.5" y="760.0" width="2" height="2" fill="#e8e818"/>
<rect x="1134.5" y="763.2" width="2" height="2" fill="#e8e818"/>
<rect x="1134.5" y="766.4" width="2" height="2" fill="#e8e818"/>
<rect x="1134.5" y="769.6" width="2" height="2" fill="#e8e818"/>
<rect x="1134.5" y="772.8" width="2" height="2" fill="#e8e818"/>
<rect x="1134.5" y="776.0" width="2" height="2" fill="#e8e818"/>
<rect x="1134.5" y="779.2" width="2" height="2" fill="#e8e818"/>
<rect x="1134.5" y="782.4" width="2" height="2" fill="#e8e818"/>
<rect x="1134.5" y="785.6" width="2" height="2" fill="#e8e818"/>
<rect x="1134.5" y="788.8" width="2" height="2" fill="#e8e818"/>
<rect x="1134.5" y="792.0" width="2" height="2" fill="#e8e818"/>
<rect x="1134.5" y="795.2" width="2" height="2" fill="#e8e818"/>
<rect x="1134.5" y="798.4" width="2" height="2" fill="#e8e818"/>
<rect x="1134.5" y="801.6" width="2" height="2" fill="#e8e818"/>
<rect x="1134.5" y="804.8" width="2" height="2" fill="#e8e818"/>
<rect x="1134.5" y="808.0" width="2" height="2" fill="#e8e818"/>
<rect x="1134.5" y="811.2" width="2" height="2" fill="#e8e818"/>
<rect x="1134.5" y="814.4" width="2" height="2" fill="#e8e818"/>
<rect x="1134.5" y="817.6" width="2" height="2" fill="#e8e818"/>
<rect x="1134.5" y="820.8" width="2" height="2" fill="#e8e818"/>
<rect x="1134.5" y="824.0" width="2" height="2" fill="#e8e818"/>
<rect x="1134.5" y="827.2" width="2" height="2" fill="#e8e818"/>
<rect x="1134.5" y="830.4" width="2" height="2" fill="#e8e818"/>
<rect x="1134.5" y="833.6" width="2" height="2" fill="#e8e818"/>
<rect x="1134.5" y="836.8" width="2" height="2" fill="#e8e818"/>
<rect x="1134.5" y="840.0" width="2" height="2" fill="#e8e818"/>
<rect x="1134.5" y="843.2" width="2" height="2" fill="#e8e818"/>
<rect x="1134.5" y="846.4" width="2" height="2" fill="#e8e818"/>
<rect x="1134.5" y="849.6" width="2" height="2" fill="#e8e818"/>
<rect x="1134.5" y="852.8" width="2" height="2" fill="#e8e818"/>
<rect x="1134.5" y="856.0" width="2" height="2" fill="#e8e818"/>
<rect x="1134.5" y="859.2" width="2" height="2" fill="#e8e818"/>
<rect x="1134.5" y="862.4" width="2" height="2" fill="#e8e818"/>
<rect x="1134.5" y="865.6" width="2" height="2" fill="#e8e818"/>
<rect x="1134.5" y="868.8" width="2" height="2" fill="#e8e818"/>
<rect x="1134.5" y="872.0" width="2" height="2" fill="#e8e818"/>
<rect x="1134.5" y="875.2" width="2" height="2" fill="#e8e818"/>
<rect x="1134.5" y="878.4" width="2" height="2" fill="#e8e818"/>
<rect x="1134.5" y="881.6" width="2" height="2" fill="#e8e818"/>
<rect x="1134.5" y="884.8" width="2" height="2" fill="#e8e818"/>
<rect x="1134.5" y="888.0" width="2" height="2" fill="#e8e818"/>
<rect x="1134.5" y="891.2" width="2" height="2" fill="#e8e818"/>
<rect x="1134.5" y="894.4" width="2" height="2" fill="#e8e818"/>
<rect x="1134.5" y="897.6" width="2" height="2" fill="#e8e818"/>
<rect x="1134.5" y="900.8" width="2" height="2" fill="#e8e818"/>
<rect x="1134.5" y="904.0" width="2" height="2" fill="#e8e818"/>
<rect x="1134.5" y="907.2" width="2" height="2" fill="#e8e818"/>
<rect x="1289.0" y="744.0" width="2" height="2" fill="#e8e818"/>
<rect x="1289.0" y="747.2" width="2" height="2" fill="#e8e818"/>
<rect x="1289.0" y="750.4" width="2" height="2" fill="#e8e818"/>
<rect x="1289.0" y="753.6" width="2" height="2" fill="#e8e818"/>
<rect x="1289.0" y="756.8" width="2" height="2" fill="#e8e818"/>
<rect x="1289.0" y="760.0" width="2" height="2" fill="#e8e818"/>
<rect x="1289.0" y="763.2" width="2" height="2" fill="#e8e818"/>
<rect x="1289.0" y="766.4" width="2" height="2" fill="#e8e818"/>
<rect x="1289.0" y="769.6" width="2" height="2" fill="#e8e818"/>
<rect x="1289.0" y="772.8" width="2" height="2" fill="#e8e818"/>
<rect x="1289.0" y="776.0" width="2" height="2" fill="#e8e818"/>
<rect x="1289.0" y="779.2" width="2" height="2" fill="#e8e818"/>
<rect x="1289.0" y="782.4" width="2" height="2" fill="#e8e818"/>
<rect x="1289.0" y="785.6" width="2" height="2" fill="#e8e818"/>
<rect x="1289.0" y="788.8" width="2" height="2" fill="#e8e818"/>
<rect x="1289.0" y="792.0" width="2" height="2" fill="#e8e818"/>
<rect x="1289.0" y="795.2" width="2" height="2" fill="#e8e818"/>
<rect x="1289.0" y="798.4" width="2" height="2" fill="#e8e818"/>
<rect x="1289.0" y="801.6" width="2" height="2" fill="#e8e818"/>
<rect x="1289.0" y="804.8" width="2" height="2" fill="#e8e818"/>
<rect x="1289.0" y="808.0" width="2" height="2" fill="#e8e818"/>
<rect x="1289.0" y="811.2" width="2" height="2" fill="#e8e818"/>
<rect x="1289.0" y="814.4" width="2" height="2" fill="#e8e818"/>
<rect x="1289.0" y="817.6" width="2" height="2" fill="#e8e818"/>
<rect x="1289.0" y="820.8" width="2" height="2" fill="#e8e818"/>
<rect x="1289.0" y="824.0" width="2" height="2" fill="#e8e818"/>
<rect x="1289.0" y="827.2" width="2" height="2" fill="#e8e818"/>
<rect x="1289.0" y="830.4" width="2" height="2" fill="#e8e818"/>
<rect x="1289.0" y="833.6" width="2" height="2" fill="#e8e818"/>
<rect x="1289.0" y="836.8" width="2" height="2" fill="#e8e818"/>
<rect x="1289.0" y="840.0" width="2" height="2" fill="#e8e818"/>
<rect x="1289.0" y="843.2" width="2" height="2" fill="#e8e818"/>
<rect x="1289.0" y="846.4" width="2" height="2" fill="#e8e818"/>
<rect x="1289.0" y="849.6" width="2" height="2" fill="#e8e818"/>
<rect x="1289.0" y="852.8" width="2" height="2" fill="#e8e818"/>
<rect x="1289.0" y="856.0" width="2" height="2" fill="#e8e818"/>
<rect x="1289.0" y="859.2" width="2" height="2" fill="#e8e818"/>
<rect x="1289.0" y="862.4" width="2" height="2" fill="#e8e818"/>
<rect x="1289.0" y="865.6" width="2" height="2" fill="#e8e818"/>
<rect x="1289.0" y="868.8" width="2" height="2" fill="#e8e818"/>
<rect x="1289.0" y="872.0" width="2" height="2" fill="#e8e818"/>
<rect x="1289.0" y="875.2" width="2" height="2" fill="#e8e818"/>
<rect x="1289.0" y="878.4" width="2" height="2" fill="#e8e818"/>
<rect x="1289.0" y="881.6" width="2" height="2" fill="#e8e818"/>
<rect x="1289.0" y="884.8" width="2" height="2" fill="#e8e818"/>
<rect x="1289.0" y="888.0" width="2" height="2" fill="#e8e818"/>
<rect x="1289.0" y="891.2" width="2" height="2" fill="#e8e818"/>
<rect x="1289.0" y="894.4" width="2" height="2" fill="#e8e818"/>
<rect x="1289.0" y="897.6" width="2" height="2" fill="#e8e818"/>
<rect x="1289.0" y="900.8" width="2" height="2" fill="#e8e818"/>
<rect x="1289.0" y="904.0" width="2" height="2" fill="#e8e818"/>
<rect x="1289.0" y="907.2" width="2" height="2" fill="#e8e818"/>
<rect x="1443.5" y="744.0" width="2" height="2" fill="#e8e818"/>
<rect x="1443.5" y="747.2" width="2" height="2" fill="#e8e818"/>
<rect x="1443.5" y="750.4" width="2" height="2" fill="#e8e818"/>
<rect x="1443.5" y="753.6" width="2" height="2" fill="#e8e818"/>
<rect x="1443.5" y="756.8" width="2" height="2" fill="#e8e818"/>
<rect x="1443.5" y="760.0" width="2" height="2" fill="#e8e818"/>
<rect x="1443.5" y="763.2" width="2" height="2" fill="#e8e818"/>
<rect x="1443.5" y="766.4" width="2" height="2" fill="#e8e818"/>
<rect x="1443.5" y="769.6" width="2" height="2" fill="#e8e818"/>
<rect x="1443.5" y="772.8" width="2" height="2" fill="#e8e818"/>
<rect x="1443.5" y="776.0" width="2" height="2" fill="#e8e818"/>
<rect x="1443.5" y="779.2" width="2" height="2" fill="#e8e818"/>
<rect x="1443.5" y="782.4" width="2" height="2" fill="#e8e818"/>
<rect x="1443.5" y="785.6" width="2" height="2" fill="#e8e818"/>
<rect x="1443.5" y="788.8" width="2" height="2" fill="#e8e818"/>
<rect x="1443.5" y="792.0" width="2" height="2" fill="#e8e818"/>
<rect x="1443.5" y="795.2" width="2" height="2" fill="#e8e818"/>
<rect x="1443.5" y="798.4" width="2" height="2" fill="#e8e818"/>
<rect x="1443.5" y="801.6" width="2" height="2" fill="#e8e818"/>
<rect x="1443.5" y="804.8" width="2" height="2" fill="#e8e818"/>
<rect x="1443.5" y="808.0" width="2" height="2" fill="#e8e818"/>
<rect x="1443.5" y="811.2" width="2" height="2" fill="#e8e818"/>
<rect x="1443.5" y="814.4" width="2" height="2" fill="#e8e818"/>
<rect x="1443.5" y="817.6" width="2" height="2" fill="#e8e818"/>
<rect x="1443.5" y="820.8" width="2" height="2" fill="#e8e818"/>
<rect x="1443.5" y="824.0" width="2" height="2" fill="#e8e818"/>
<rect x="1443.5" y="827.2" width="2" height="2" fill="#e8e818"/>
<rect x="1443.5" y="830.4" width="2" height="2" fill="#e8e818"/>
<rect x="1443.5" y="833.6" width="2" height="2" fill="#e8e818"/>
<rect x="1443.5" y="836.8" width="2" height="2" fill="#e8e818"/>
<rect x="1443.5" y="840.0" width="2" height="2" fill="#e8e818"/>
<rect x="1443.5" y="843.2" width="2" height="2" fill="#e8e818"/>
<rect x="1443.5" y="846.4" width="2" height="2" fill="#e8e818"/>
<rect x="1443.5" y="849.6" width="2" height="2" fill="#e8e818"/>
<rect x="1443.5" y="852.8" width="2" height="2" fill="#e8e818"/>
<rect x="1443.5" y="856.0" width="2" height="2" fill="#e8e818"/>
<rect x="1443.5" y="859.2" width="2" height="2" fill="#e8e818"/>
<rect x="1443.5" y="862.4" width="2" height="2" fill="#e8e818"/>
<rect x="1443.5" y="865.6" width="2" height="2" fill="#e8e818"/>
<rect x="1443.5" y="868.8" width="2" height="2" fill="#e8e818"/>
<rect x="1443.5" y="872.0" width="2" height="2" fill="#e8e818"/>
<rect x="1443.5" y="875.2" width="2" height="2" fill="#e8e818"/>
<rect x="1443.5" y="878.4" width="2" height="2" fill="#e8e818"/>
<rect x="1443.5" y="881.6" width="2" height="2" fill="#e8e818"/>
<rect x="1443.5" y="884.8" width="2" height="2" fill="#e8e818"/>
<rect x="1443.5" y="888.0" width="2" height="2" fill="#e8e818"/>
<rect x="1443.5" y="891.2" width="2" height="2" fill="#e8e818"/>
<rect x="1443.5" y="894.4" width="2" height="2" fill="#e8e818"/>
<rect x="1443.5" y="897.6" width="2" height="2" fill="#e8e818"/>
<rect x="1443.5" y="900.8" width="2" height="2" fill="#e8e818"/>
<rect x="1443.5" y="904.0" width="2" height="2" fill="#e8e818"/>
<rect x="1443.5" y="907.2" width="2" height="2" fill="#e8e818"/>
<rect x="1598.0" y="744.0" width="2" height="2" fill="#e8e818"/>
<rect x="1598.0" y="747.2" width="2" height="2" fill="#e8e818"/>
<rect x="1598.0" y="750.4" width="2" height="2" fill="#e8e818"/>
<rect x="1598.0" y="753.6" width="2" height="2" fill="#e8e818"/>
<rect x="1598.0" y="756.8" width="2" height="2" fill="#e8e818"/>
<rect x="1598.0" y="760.0" width="2" height="2" fill="#e8e818"/>
<rect x="1598.0" y="763.2" width="2" height="2" fill="#e8e818"/>
<rect x="1598.0" y="766.4" width="2" height="2" fill="#e8e818"/>
<rect x="1598.0" y="769.6" width="2" height="2" fill="#e8e818"/>
<rect x="1598.0" y="772.8" width="2" height="2" fill="#e8e818"/>
<rect x="1598.0" y="776.0" width="2" height="2" fill="#e8e818"/>
<rect x="1598.0" y="779.2" width="2" height="2" fill="#e8e818"/>
<rect x="1598.0" y="782.4" width="2" height="2" fill="#e8e818"/>
<rect x="1598.0" y="785.6" width="2" height="2" fill="#e8e818"/>
<rect x="1598.0" y="788.8" width="2" height="2" fill="#e8e818"/>
<rect x="1598.0" y="792.0" width="2" height="2" fill="#e8e818"/>
<rect x="1598.0" y="795.2" width="2" height="2" fill="#e8e818"/>
<rect x="1598.0" y="798.4" width="2" height="2" fill="#e8e818"/>
<rect x="1598.0" y="801.6" width="2" height="2" fill="#e8e818"/>
<rect x="1598.0" y="804.8" width="2" height="2" fill="#e8e818"/>
<rect x="1598.0" y="808.0" width="2" height="2" fill="#e8e818"/>
<rect x="1598.0" y="811.2" width="2" height="2" fill="#e8e818"/>
<rect x="1598.0" y="814.4" width="2" height="2" fill="#e8e818"/>
<rect x="1598.0" y="817.6" width="2" height="2" fill="#e8e818"/>
<rect x="1598.0" y="820.8" width="2" height="2" fill="#e8e818"/>
<rect x="1598.0" y="824.0" width="2" height="2" fill="#e8e818"/>
<rect x="1598.0" y="827.2" width="2" height="2" fill="#e8e818"/>
<rect x="1598.0" y="830.4" width="2" height="2" fill="#e8e818"/>
<rect x="1598.0" y="833.6" width="2" height="2" fill="#e8e818"/>
<rect x="1598.0" y="836.8" width="2" height="2" fill="#e8e818"/>
<rect x="1598.0" y="840.0" width="2" height="2" fill="#e8e818"/>
<rect x="1598.0" y="843.2" width="2" height="2" fill="#e8e818"/>
<rect x="1598.0" y="846.4" width="2" height="2" fill="#e8e818"/>
<rect x="1598.0" y="849.6" width="2" height="2" fill="#e8e818"/>
<rect x="1598.0" y="852.8" width="2" height="2" fill="#e8e818"/>
<rect x="1598.0" y="856.0" width="2" height="2" fill="#e8e818"/>
<rect x="1598.0" y="859.2" width="2" height="2" fill="#e8e818"/>
<rect x="1598.0" y="862.4" width="2" height="2" fill="#e8e818"/>
<rect x="1598.0" y="865.6" width="2" height="2" fill="#e8e818"/>
<rect x="1598.0" y="868.8" width="2" height="2" fill="#e8e818"/>
<rect x="1598.0" y="872.0" width="2" height="2" fill="#e8e818"/>
<rect x="1598.0" y="875.2" width="2" height="2" fill="#e8e818"/>
<rect x="1598.0" y="878.4" width="2" height="2" fill="#e8e818"/>
<rect x="1598.0" y="881.6" width="2" height="2" fill="#e8e818"/>
<rect x="1598.0" y="884.8" width="2" height="2" fill="#e8e818"/>
<rect x="1598.0" y="888.0" width="2" height="2" fill="#e8e818"/>
<rect x="1598.0" y="891.2" width="2" height="2" fill="#e8e818"/>
<rect x="1598.0" y="894.4" width="2" height="2" fill="#e8e818"/>
<rect x="1598.0" y="897.6" width="2" height="2" fill="#e8e818"/>
<rect x="1598.0" y="900.8" width="2" height="2" fill="#e8e818"/>
<rect x="1598.0" y="904.0" width="2" height="2" fill="#e8e818"/>
<rect x="1598.0" y="907.2" width="2" height="2" fill="#e8e818"/>
<rect x="1752.4" y="744.0" width="2" height="2" fill="#e8e818"/>
<rect x="1752.4" y="747.2" width="2" height="2" fill="#e8e818"/>
<rect x="1752.4" y="750.4" width="2" height="2" fill="#e8e818"/>
<rect x="1752.4" y="753.6" width="2" height="2" fill="#e8e818"/>
<rect x="1752.4" y="756.8" width="2" height="2" fill="#e8e818"/>
<rect x="1752.4" y="760.0" width="2" height="2" fill="#e8e818"/>
<rect x="1752.4" y="763.2" width="2" height="2" fill="#e8e818"/>
<rect x="1752.4" y="766.4" width="2" height="2" fill="#e8e818"/>
<rect x="1752.4" y="769.6" width="2" height="2" fill="#e8e818"/>
<rect x="1752.4" y="772.8" width="2" height="2" fill="#e8e818"/>
<rect x="1752.4" y="776.0" width="2" height="2" fill="#e8e818"/>
<rect x="1752.4" y="779.2" width="2" height="2" fill="#e8e818"/>
<rect x="1752.4" y="782.4" width="2" height="2" fill="#e8e818"/>
<rect x="1752.4" y="785.6" width="2" height="2" fill="#e8e818"/>
<rect x="1752.4" y="788.8" width="2" height="2" fill="#e8e818"/>
<rect x="1752.4" y="792.0" width="2" height="2" fill="#e8e818"/>
<rect x="1752.4" y="795.2" width="2" height="2" fill="#e8e818"/>
<rect x="1752.4" y="798.4" width="2" height="2" fill="#e8e818"/>
<rect x="1752.4" y="801.6" width="2" height="2" fill="#e8e818"/>
<rect x="1752.4" y="804.8" width="2" height="2" fill="#e8e818"/>
<rect x="1752.4" y="808.0" width="2" height="2" fill="#e8e818"/>
<rect x="1752.4" y="811.2" width="2" height="2" fill="#e8e818"/>
<rect x="1752.4" y="814.4" width="2" height="2" fill="#e8e818"/>
<rect x="1752.4" y="817.6" width="2" height="2" fill="#e8e818"/>
<rect x="1752.4" y="820.8" width="2" height="2" fill="#e8e818"/>
<rect x="1752.4" y="824.0" width="2" height="2" fill="#e8e818"/>
<rect x="1752.4" y="827.2" width="2" height="2" fill="#e8e818"/>
<rect x="1752.4" y="830.4" width="2" height="2" fill="#e8e818"/>
<rect x="1752.4" y="833.6" width="2" height="2" fill="#e8e818"/>
<rect x="1752.4" y="836.8" width="2" height="2" fill="#e8e818"/>
<rect x="1752.4" y="840.0" width="2" height="2" fill="#e8e818"/>
<rect x="1752.4" y="843.2" width="2" height="2" fill="#e8e818"/>
<rect x="1752.4" y="846.4" width="2" height="2" fill="#e8e818"/>
<rect x="1752.4" y="849.6" width="2" height="2" fill="#e8e818"/>
<rect x="1752.4" y="852.8" width="2" height="2" fill="#e8e818"/>
<rect x="1752.4" y="856.0" width="2" height="2" fill="#e8e818"/>
<rect x="1752.4" y="859.2" width="2" height="2" fill="#e8e818"/>
<rect x="1752.4" y="862.4" width="2" height="2" fill="#e8e818"/>
<rect x="1752.4" y="865.6" width="2" height="2" fill="#e8e818"/>
<rect x="1752.4" y="868.8" width="2" height="2" fill="#e8e818"/>
<rect x="1752.4" y="872.0" width="2" height="2" fill="#e8e818"/>
<rect x="1752.4" y="875.2" width="2" height="2" fill="#e8e818"/>
<rect x="1752.4" y="878.4" width="2" height="2" fill="#e8e818"/>
<rect x="1752.4" y="881.6" width="2" height="2" fill="#e8e818"/>
<rect x="1752.4" y="884.8" width="2" height="2" fill="#e8e818"/>
<rect x="1752.4" y="888.0" width="2" height="2" fill="#e8e818"/>
<rect x="1752.4" y="891.2" width="2" height="2" fill="#e8e818"/>
<rect x="1752.4" y="894.4" width="2" height="2" fill="#e8e818"/>
<rect x="1752.4" y="897.6" width="2" height="2" fill="#e8e818"/>
<rect x="1752.4" y="900.8" width="2" height="2" fill="#e8e818"/>
<rect x="1752.4" y="904.0" width="2" height="2" fill="#e8e818"/>
<rect x="1752.4" y="907.2" width="2" height="2" fill="#e8e818"/>
<polygon points="1200.9,907.0 1201.5,902.0 1201.5,799.1 1202.9,799.1 1202.9,902.0 1203.5,907.0" fill="#f0f0f0"/>
<polygon points="1203.3,907.0 1203.9,902.0 1203.9,858.8 1205.2,858.8 1205.2,902.0 1205.9,907.0" fill="#90d890"/>
<polygon points="1220.5,907.0 1221.1,902.0 1221.1,780.2 1222.5,780.2 1222.5,902.0 1223.1,907.0" fill="#f0f0f0"/>
<polygon points="1222.6,907.0 1223.2,902.0 1223.2,872.6 1224.6,872.6 1224.6,902.0 1225.2,907.0" fill="#90d890"/>
<polygon points="1242.0,907.0 1242.6,902.0 1242.6,847.0 1244.0,847.0 1244.0,902.0 1244.6,907.0" fill="#90d890"/>
<polygon points="1258.7,907.0 1259.3,902.0 1259.3,744.0 1260.7,744.0 1260.7,902.0 1261.3,907.0" fill="#f0f0f0"/>
<polygon points="1278.2,907.0 1278.8,902.0 1278.8,774.7 1280.2,774.7 1280.2,902.0 1280.8,907.0" fill="#f0f0f0"/>
<polygon points="1280.6,907.0 1281.2,902.0 1281.2,882.4 1282.6,882.4 1282.6,902.0 1283.2,907.0" fill="#90d890"/>
<polygon points="1355.8,907.0 1356.4,902.0 1356.4,779.2 1357.8,779.2 1357.8,902.0 1358.4,907.0" fill="#f0f0f0"/>
<polygon points="1357.9,907.0 1358.5,902.0 1358.5,839.8 1359.9,839.8 1359.9,902.0 1360.5,907.0" fill="#90d890"/>
<polygon points="1374.7,907.0 1375.3,902.0 1375.3,815.0 1376.7,815.0 1376.7,902.0 1377.3,907.0" fill="#f0f0f0"/>
<polygon points="1377.5,907.0 1378.1,902.0 1378.1,895.7 1379.5,895.7 1379.5,902.0 1380.1,907.0" fill="#90d890"/>
<polygon points="1396.7,907.0 1397.3,902.0 1397.3,886.5 1398.7,886.5 1398.7,902.0 1399.3,907.0" fill="#90d890"/>
<polygon points="1405.9,907.0 1406.5,902.0 1406.5,893.9 1407.9,893.9 1407.9,902.0 1408.5,907.0" fill="#a0a0a0"/>
<polygon points="1413.3,907.0 1413.9,902.0 1413.9,780.2 1415.2,780.2 1415.2,902.0 1415.9,907.0" fill="#f0f0f0"/>
<polygon points="1416.5,907.0 1417.1,902.0 1417.1,875.8 1418.5,875.8 1418.5,902.0 1419.1,907.0" fill="#a0a0a0"/>
<polygon points="1433.1,907.0 1433.8,902.0 1433.8,864.7 1435.1,864.7 1435.1,902.0 1435.7,907.0" fill="#f0f0f0"/>
<polygon points="1435.5,907.0 1436.1,902.0 1436.1,868.0 1437.5,868.0 1437.5,902.0 1438.1,907.0" fill="#90d890"/>
<polygon points="1510.3,907.0 1510.9,902.0 1510.9,775.8 1512.2,775.8 1512.2,902.0 1512.9,907.0" fill="#f0f0f0"/>
<polygon points="1512.8,907.0 1513.4,902.0 1513.4,883.5 1514.8,883.5 1514.8,902.0 1515.4,907.0" fill="#90d890"/>
<polygon points="1529.7,907.0 1530.3,902.0 1530.3,779.7 1531.7,779.7 1531.7,902.0 1532.3,907.0" fill="#f0f0f0"/>
<polygon points="1532.0,907.0 1532.6,902.0 1532.6,793.3 1534.0,793.3 1534.0,902.0 1534.6,907.0" fill="#90d890"/>
<polygon points="1551.6,907.0 1552.2,902.0 1552.2,805.6 1553.6,805.6 1553.6,902.0 1554.2,907.0" fill="#90d890"/>
<polygon points="1568.2,907.0 1568.8,902.0 1568.8,798.1 1570.2,798.1 1570.2,902.0 1570.8,907.0" fill="#f0f0f0"/>
<polygon points="1587.6,907.0 1588.2,902.0 1588.2,760.9 1589.6,760.9 1589.6,902.0 1590.2,907.0" fill="#f0f0f0"/>
<polygon points="1589.8,907.0 1590.4,902.0 1590.4,869.0 1591.8,869.0 1591.8,902.0 1592.4,907.0" fill="#90d890"/>
<polygon points="1649.2,907.0 1649.8,902.0 1649.8,904.5 1651.2,904.5 1651.2,902.0 1651.8,907.0" fill="#a0a0a0"/>
<polygon points="1664.9,907.0 1665.5,902.0 1665.5,746.3 1666.9,746.3 1666.9,902.0 1667.5,907.0" fill="#f0f0f0"/>
<polygon points="1684.1,907.0 1684.8,902.0 1684.8,749.6 1686.1,749.6 1686.1,902.0 1686.7,907.0" fill="#f0f0f0"/>
<polygon points="1722.9,907.0 1723.5,902.0 1723.5,797.1 1724.9,797.1 1724.9,902.0 1725.5,907.0" fill="#f0f0f0"/>
<polygon points="1742.1,907.0 1742.8,902.0 1742.8,814.0 1744.1,814.0 1744.1,902.0 1744.7,907.0" fill="#f0f0f0"/>
<polygon points="1744.4,907.0 1745.0,902.0 1745.0,900.4 1746.4,900.4 1746.4,902.0 1747.0,907.0" fill="#90d890"/>
<text x="996.20" y="748.80" font-family="Liberation Sans" font-size="16.80" fill="#ffffff" >1.0</text>
<text x="996.27" y="781.60" font-family="Liberation Sans" font-size="16.80" fill="#ffffff" >0.8</text>
<text x="996.29" y="814.40" font-family="Liberation Sans" font-size="16.80" fill="#ffffff" >0.6</text>
<text x="996.04" y="847.20" font-family="Liberation Sans" font-size="16.80" fill="#ffffff" >0.4</text>
<text x="996.39" y="880.00" font-family="Liberation Sans" font-size="16.80" fill="#ffffff" >0.2</text>
<text x="996.20" y="912.80" font-family="Liberation Sans" font-size="16.80" fill="#ffffff" >0.0</text>
<text x="1065.85" y="927.90" font-family="Liberation Sans" font-size="16.50" fill="#ffffff" >-900</text>
<text x="1146.31" y="927.90" font-family="Liberation Sans" font-size="16.50" fill="#ffffff" >-700</text>
<text x="1226.77" y="927.90" font-family="Liberation Sans" font-size="16.50" fill="#ffffff" >-500</text>
<text x="1307.23" y="927.90" font-family="Liberation Sans" font-size="16.50" fill="#ffffff" >-300</text>
<text x="1387.69" y="927.90" font-family="Liberation Sans" font-size="16.50" fill="#ffffff" >-100</text>
<text x="1470.63" y="927.90" font-family="Liberation Sans" font-size="16.50" fill="#ffffff" >100</text>
<text x="1551.41" y="927.90" font-family="Liberation Sans" font-size="16.50" fill="#ffffff" >300</text>
<text x="1631.85" y="927.90" font-family="Liberation Sans" font-size="16.50" fill="#ffffff" >500</text>
<text x="1712.22" y="927.90" font-family="Liberation Sans" font-size="16.50" fill="#ffffff" >700</text>
<text x="1792.71" y="927.90" font-family="Liberation Sans" font-size="16.50" fill="#ffffff" >900</text>
<text x="1393.52" y="952.00" font-family="Liberation Sans" font-size="17.50" fill="#ffffff" textLength="102.09" lengthAdjust="spacing" >TII Subcarrier</text>
<text x="-864.31" y="976.20" font-family="Liberation Sans" font-size="16.50" fill="#fff" font-weight="bold" textLength="77.08" lengthAdjust="spacing" transform="rotate(-90)">Magnitude</text>
</svg>
</body></html>
